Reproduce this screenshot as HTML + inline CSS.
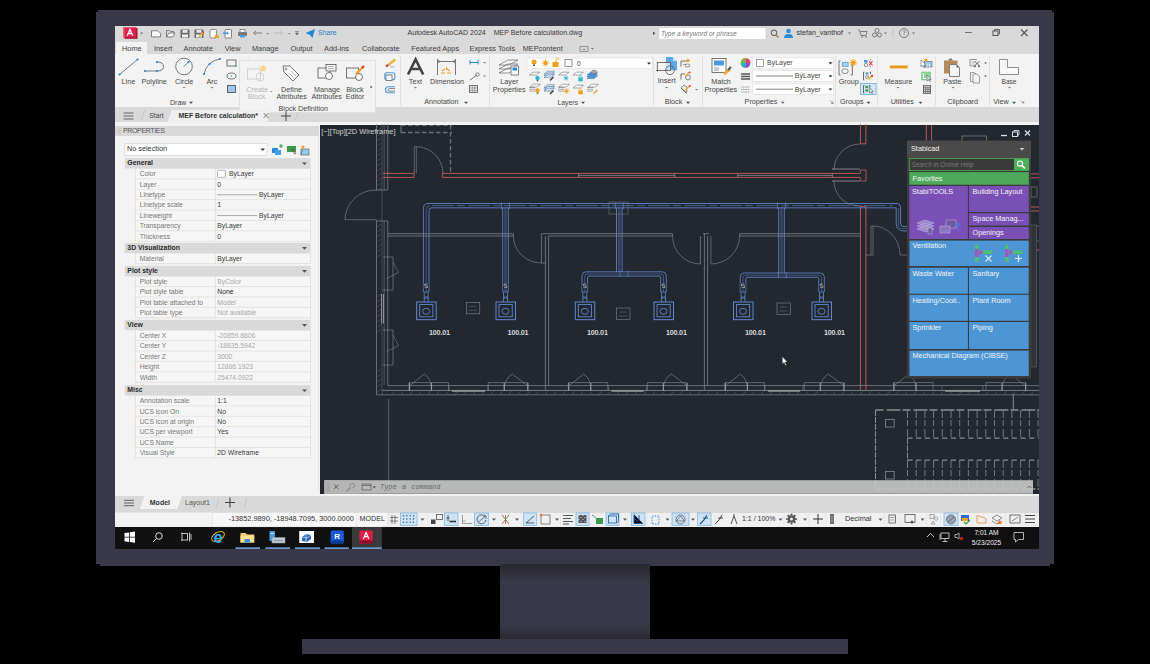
<!DOCTYPE html>
<html><head><meta charset="utf-8"><style>
html,body{margin:0;padding:0;}
body{width:1150px;height:664px;background:#000;position:relative;overflow:hidden;font-family:"Liberation Sans", sans-serif;}
.t{position:absolute;white-space:pre;font-family:"Liberation Sans", sans-serif;}
div{box-sizing:border-box;}
svg{position:absolute;left:0;top:0;}
</style></head><body>

<div style="position:absolute;left:96px;top:12px;width:958px;height:552px;background:#393849;"></div>
<div style="position:absolute;left:98px;top:10px;width:954px;height:2px;background:#393849;"></div>
<div style="position:absolute;left:100px;top:564px;width:950px;height:2px;background:#393849;"></div>
<div style="position:absolute;left:500px;top:564px;width:150px;height:75px;background:linear-gradient(#2a2a33 0px,#2c2b35 7px,#33323f 12px,#393849 17px,#393849 62px,#33323f 67px,#2c2b35 71px,#2a2a33 75px);"></div>
<div style="position:absolute;left:302px;top:639px;width:546px;height:15px;background:#393849;"></div>
<div style="position:absolute;left:115px;top:26px;width:924px;height:16px;background:#d9d9d9;"></div>
<div style="position:absolute;left:115px;top:42px;width:924px;height:12px;background:#d9d9d9;"></div>
<div style="position:absolute;left:116px;top:42px;width:31px;height:12px;background:#f3f3f3;"></div>
<div style="position:absolute;left:115px;top:54px;width:924px;height:53px;background:#f3f3f3;"></div>
<div style="position:absolute;left:115px;top:107px;width:924px;height:15px;background:#d9d9d9;"></div>
<div style="position:absolute;left:115px;top:122px;width:924px;height:3px;background:#f3f3f3;"></div>
<div style="position:absolute;left:115px;top:122px;width:205px;height:372px;background:#f3f3f3;"></div>
<div style="position:absolute;left:320px;top:125px;width:719px;height:369px;background:#212830;"></div>
<div style="position:absolute;left:115px;top:494px;width:924px;height:2px;background:#f3f3f3;"></div>
<div style="position:absolute;left:115px;top:496px;width:924px;height:16.5px;background:#d9d9d9;"></div>
<div style="position:absolute;left:115px;top:512.5px;width:924px;height:14.5px;background:#f0f0f0;"></div>
<div style="position:absolute;left:115px;top:527px;width:924px;height:22px;background:#101010;"></div>
<svg width="1150" height="664" viewBox="0 0 1150 664"><path d="M124.5 28 h13 v10.8 h-13z" fill="#a3102c"/><path d="M123 27.3 h13.3 v10.2 h-13.3z" fill="#e21f4b"/><path d="M123 27.3 h1.5 v10.2 h-1.5z" fill="#f06080"/><path d="M127.2 35.8 L130 29.3 L132.8 35.8 M128.5 33.5 h3" stroke="#fff" stroke-width="1.3" fill="none"/><path d="M140 32.5 h3 l-1.5 1.8z" fill="#666"/><path d="M151.5 30.8 h6.5 l2.5 2.5 v3.6 h-9z" fill="#fafafa" stroke="#666" stroke-width="0.8"/><path d="M166.5 30.5 h3 l1 1 h3 v2" fill="none" stroke="#666" stroke-width="0.8"/><path d="M166.5 30.5 v6.5 h6 l2.5 -4 h-6 l-2.5 4" fill="#fafafa" stroke="#666" stroke-width="0.8"/><rect x="180.5" y="29.5" width="9" height="8.5" fill="#6a6a6a" rx="0.8"/><rect x="182.5" y="30" width="5" height="2.8" fill="#e8e8e8"/><rect x="182" y="34.5" width="6" height="3" fill="#f0f0f0"/><rect x="194.5" y="29.5" width="9" height="8.5" fill="#6a6a6a" rx="0.8"/><rect x="196.5" y="30" width="5" height="2.8" fill="#e8e8e8"/><rect x="196" y="34.5" width="6" height="3" fill="#f0f0f0"/><path d="M199 37 l4 -4.5" stroke="#e8b040" stroke-width="1.8"/><circle cx="203.3" cy="32.3" r="0.9" fill="#e33"/><rect x="210" y="29.5" width="6.5" height="8.5" fill="#fafafa" stroke="#777" stroke-width="0.8" rx="0.8"/><path d="M214.5 38 q0 -3.5 2.5 -3.5 q2 0 2 3.5z" fill="#f0a020"/><rect x="225" y="29.5" width="6.5" height="8.5" fill="#fafafa" stroke="#666" stroke-width="0.8" rx="0.8"/><path d="M223 33.2 h5" stroke="#2a8ad8" stroke-width="1.3"/><path d="M227 31.8 l1.5 1.4 l-1.5 1.4" stroke="#2a8ad8" stroke-width="0.8" fill="none"/><rect x="238" y="32" width="9" height="4" fill="#777" rx="1"/><rect x="240" y="29.5" width="5" height="3" fill="#fafafa" stroke="#666" stroke-width="0.7"/><rect x="240" y="35" width="5" height="2.5" fill="#4aa0e0"/><path d="M262 33 h-8 M256 31 l-2.5 2 l2.5 2" stroke="#777" stroke-width="0.9" fill="none"/><path d="M266.5 33 h2.5 l-1.25 1.5z" fill="#777"/><path d="M274 33 h8 M280 31 l2.5 2 l-2.5 2" stroke="#bbb" stroke-width="0.9" fill="none"/><path d="M288 33 h2.5 l-1.25 1.5z" fill="#888"/><path d="M295 31.5 h4 M295.5 33 h3 l-1.5 2z" stroke="#666" stroke-width="0.6" fill="#666"/><path d="M305.5 33 l9.5 -4 l-2.5 9 l-2.5 -3 z" fill="#1f86d8"/><path d="M653 31.5 l2.5 1.75 l-2.5 1.75z" fill="#555"/><rect x="659" y="27.5" width="107" height="12" fill="#fff" stroke="#ccc" stroke-width="0.6"/><circle cx="774" cy="32.8" r="2.8" fill="none" stroke="#555" stroke-width="1"/><path d="M776 35 l2.5 2.5" stroke="#9a7a3a" stroke-width="1.3"/><circle cx="788.5" cy="31" r="2.3" fill="#2a8ad8"/><path d="M784 38 q0 -4 4.5 -4 q4.5 0 4.5 4z" fill="#2a8ad8"/><path d="M848 32.5 h3 l-1.5 1.8z" fill="#777"/><path d="M858 30 h1.5 l1.5 5.5 h5 l1 -4 h-6.5" fill="none" stroke="#666" stroke-width="0.8"/><circle cx="862" cy="37" r="0.8" fill="#666"/><circle cx="866" cy="37" r="0.8" fill="#666"/><circle cx="877" cy="30.5" r="2" fill="none" stroke="#666" stroke-width="0.8"/><circle cx="874.5" cy="35" r="2" fill="none" stroke="#666" stroke-width="0.8"/><circle cx="879.5" cy="35" r="2" fill="none" stroke="#666" stroke-width="0.8"/><path d="M884 32.5 h3 l-1.5 1.8z" fill="#777"/><path d="M893 28 v10" stroke="#bbb" stroke-width="0.7"/><circle cx="904" cy="33" r="4.5" fill="none" stroke="#666" stroke-width="0.8"/><path d="M912 32.5 h3 l-1.5 1.8z" fill="#777"/><path d="M965 32.5 h7" stroke="#666" stroke-width="0.9"/><rect x="993" y="31" width="5" height="4.5" fill="none" stroke="#555" stroke-width="1"/><path d="M994.5 31 v-1.5 h5 v4.5 h-1.5" fill="none" stroke="#555" stroke-width="0.9"/><path d="M1021 29.5 l6.5 6.5 M1027.5 29.5 l-6.5 6.5" stroke="#555" stroke-width="1.1"/><rect x="580" y="46.5" width="8" height="5" fill="none" stroke="#777" stroke-width="0.7"/><path d="M582.5 50 l1.5 -1.5 l1.5 1.5z" fill="#777"/><path d="M591 48 h3 l-1.5 1.8z" fill="#777"/><path d="M249.5 56 v50" stroke="#dcdcdc" stroke-width="0.8"/><path d="M400.5 56 v50" stroke="#dcdcdc" stroke-width="0.8"/><path d="M489.5 56 v50" stroke="#dcdcdc" stroke-width="0.8"/><path d="M653.5 56 v50" stroke="#dcdcdc" stroke-width="0.8"/><path d="M702.5 56 v50" stroke="#dcdcdc" stroke-width="0.8"/><path d="M835.5 56 v50" stroke="#dcdcdc" stroke-width="0.8"/><path d="M877.5 56 v50" stroke="#dcdcdc" stroke-width="0.8"/><path d="M935.5 56 v50" stroke="#dcdcdc" stroke-width="0.8"/><path d="M989.5 56 v50" stroke="#dcdcdc" stroke-width="0.8"/><path d="M119.5 74.5 L137.5 59.5" stroke="#555" stroke-width="0.8"/><circle cx="119.5" cy="74.5" r="1.1" fill="#1e88e5"/><circle cx="137.5" cy="59.5" r="1.1" fill="#1e88e5"/><path d="M145 71 h12 M157 62 q6.5 0 6.5 4.5 q0 4.5 -6.5 4.5" stroke="#555" stroke-width="0.8" fill="none"/><circle cx="145" cy="71" r="1.1" fill="#1e88e5"/><circle cx="157" cy="71" r="1.1" fill="#1e88e5"/><circle cx="157" cy="62" r="1.1" fill="#1e88e5"/><circle cx="184" cy="66.5" r="8.3" fill="none" stroke="#555" stroke-width="0.8"/><path d="M184 66.5 l4.5 -4.5" stroke="#1e88e5" stroke-width="0.9"/><circle cx="188.5" cy="62" r="1.1" fill="#1e88e5"/><path d="M182.5 87 h3 l-1.5 1.5z" fill="#777"/><path d="M204 74 q3 -13 16 -15" stroke="#555" stroke-width="0.8" fill="none"/><circle cx="204" cy="74" r="1.1" fill="#1e88e5"/><circle cx="209.5" cy="64" r="1.1" fill="#1e88e5"/><circle cx="220" cy="59" r="1.1" fill="#1e88e5"/><path d="M210.5 87 h3 l-1.5 1.5z" fill="#777"/><rect x="227" y="60" width="9" height="6" fill="none" stroke="#555" stroke-width="0.8"/><circle cx="236" cy="66" r="0.7" fill="#1e88e5"/><ellipse cx="231.5" cy="76" rx="4.5" ry="3" fill="none" stroke="#555" stroke-width="0.8"/><circle cx="231.5" cy="76" r="0.7" fill="#1e88e5"/><rect x="227.5" y="85.5" width="8" height="7" fill="#9ccaf0" stroke="#444" stroke-width="0.8"/><path d="M189 101.8 h4 l-2 2.2z" fill="#555"/><path d="M389 64.5 l5.5 -4.5" stroke="#f2b440" stroke-width="2.6" stroke-linecap="round"/><path d="M386 66.5 l2.2 -1.6" stroke="#e02a2a" stroke-width="2"/><path d="M390 66.8 h4.8" stroke="#7ab8e8" stroke-width="0.8"/><rect x="384.8" y="72.8" width="10" height="7" rx="2" fill="none" stroke="#4a9ae0" stroke-width="1.1"/><rect x="386" y="75" width="6" height="5.5" fill="#f8f8f8" stroke="#666" stroke-width="0.8"/><path d="M395 86.8 h-6.5 q-3 0 -3 3 q0 3 3 3 h6.5" stroke="#4a9ae0" stroke-width="1.1" fill="none"/><path d="M395 88.5 h-5.5 q-1.3 0 -1.3 1.3 q0 1.3 1.3 1.3 h5.5" stroke="#666" stroke-width="0.8" fill="none"/><rect x="239.5" y="60.5" width="136" height="52" fill="#f3f3f3" stroke="#dedede" stroke-width="0.8"/><rect x="247.5" y="69" width="13" height="10" fill="none" stroke="#c8c8c8" stroke-width="0.8"/><circle cx="260" cy="77" r="4" fill="none" stroke="#c8c8c8" stroke-width="0.8"/><circle cx="263" cy="68.5" r="3" fill="#f8d890"/><path d="M270 91 h2.5 l-1.25 1.5z" fill="#999"/><path d="M283 66 h7 l9 9 l-6 6 l-9 -9z" fill="#fafafa" stroke="#555" stroke-width="0.8"/><circle cx="286" cy="69" r="1" fill="none" stroke="#555" stroke-width="0.6"/><path d="M289 73 l5 5 M291 71 l5 5" stroke="#888" stroke-width="0.5"/><rect x="318" y="68" width="12" height="10" fill="none" stroke="#555" stroke-width="0.8"/><circle cx="329" cy="76" r="3.5" fill="#fafafa" stroke="#555" stroke-width="0.8"/><rect x="326" y="64.5" width="10" height="6.5" fill="#fafafa" stroke="#555" stroke-width="0.8"/><path d="M328 66.5 h6 M328 68.5 h6" stroke="#777" stroke-width="0.5"/><rect x="346.5" y="68" width="12" height="10" fill="none" stroke="#555" stroke-width="0.8"/><circle cx="359" cy="77" r="3.5" fill="#fafafa" stroke="#555" stroke-width="0.8"/><path d="M356 74 l7 -7" stroke="#f0a020" stroke-width="2.3"/><path d="M362 68 l2 -2" stroke="#e33" stroke-width="2.3"/><path d="M370.5 85.5 l2 1.5 l-2 1.5z" fill="#555"/><path d="M408 74.5 L415.6 59.5 L423.2 74.5 M410.8 69 h9.6" stroke="#444" stroke-width="2.6" fill="none"/><path d="M414 87 h3 l-1.5 1.5z" fill="#777"/><path d="M437.5 59 v16 M455.5 59 v16 M438 61.5 h17" stroke="#555" stroke-width="0.8"/><path d="M438 60 l2 1.5 l-2 1.5 M455 60 l-2 1.5 l2 1.5" stroke="#555" stroke-width="0.6" fill="none"/><path d="M442 71 l3 -2 M450 71 l-3 -2 M446.5 67 v3 M441 73 h4 M447 73 h4" stroke="#f0a020" stroke-width="1.1"/><path d="M470 60 v4.5 M478 60 v4.5 M470 62.5 h8" stroke="#2a8ad8" stroke-width="1"/><path d="M483 62 h3 l-1.5 1.5z" fill="#777"/><path d="M470 80 l7 -5" stroke="#555" stroke-width="0.8"/><circle cx="477.5" cy="74.5" r="1.7" fill="none" stroke="#555" stroke-width="0.7"/><path d="M483 75.5 h3 l-1.5 1.5z" fill="#777"/><rect x="469.5" y="85.5" width="8" height="7" fill="none" stroke="#555" stroke-width="0.8"/><path d="M469.5 88 h8 M469.5 90.3 h8 M472.2 85.5 v7 M474.9 85.5 v7" stroke="#555" stroke-width="0.5"/><path d="M464 101.8 h4 l-2 2.2z" fill="#555"/><path d="M499 65 l9 -5 h10 l-9 5z M499 69 l9 -5 h10 l-9 5z M499 73 l9 -5 h10 l-9 5z" fill="#f6f6f6" stroke="#666" stroke-width="0.7"/><rect x="511" y="66" width="7.5" height="9" fill="#fafafa" stroke="#555" stroke-width="0.7"/><rect x="512.5" y="67.5" width="4.5" height="3" fill="#2a8ad8"/><rect x="527" y="58" width="125" height="10.5" fill="#fff" stroke="#ddd" stroke-width="0.6"/><circle cx="534" cy="62" r="2.5" fill="#f0a020"/><rect x="533" y="64.5" width="2" height="1.5" fill="#555"/><circle cx="545.5" cy="63" r="2.2" fill="#f0a020"/><path d="M545.5 59 v8 M541.5 63 h8 M542.7 60.2 l5.6 5.6 M548.3 60.2 l-5.6 5.6" stroke="#f0a020" stroke-width="0.7"/><rect x="552.5" y="62" width="6" height="5" fill="#f0a020"/><path d="M556 62 v-2 q0 -1.5 1.5 -1.5 q1.5 0 1.5 1.5" stroke="#f0a020" stroke-width="0.9" fill="none"/><rect x="565" y="59.5" width="7" height="7" fill="#fff" stroke="#666" stroke-width="0.7"/><path d="M647 62.5 h4 l-2 2.2z" fill="#333"/><path d="M529.5 75 l3.5 -2.8 h7 l-3.5 2.8z" fill="#fafafa" stroke="#777" stroke-width="0.6"/><circle cx="537.5" cy="78" r="2.2" fill="#2ab8d0"/><rect x="536.7" y="80" width="1.6" height="1.3" fill="#555"/><path d="M544 74.0 l3.5 -2.8 h7 l-3.5 2.8z" fill="#cfe3f5" stroke="#5a7aa0" stroke-width="0.6"/><path d="M544 75.8 l3.5 -2.8 h7 l-3.5 2.8z" fill="#cfe3f5" stroke="#5a7aa0" stroke-width="0.6"/><path d="M544 77.6 l3.5 -2.8 h7 l-3.5 2.8z" fill="#cfe3f5" stroke="#5a7aa0" stroke-width="0.6"/><path d="M550 80.5 l3.5 -3.5" stroke="#333" stroke-width="1.2"/><path d="M558.5 75 l3.5 -2.8 h7 l-3.5 2.8z" fill="#fafafa" stroke="#777" stroke-width="0.6"/><path d="M566 75.5 v5 M563.8 78 h4.4 M564.4 76.4 l3.2 3.2 M567.6 76.4 l-3.2 3.2" stroke="#2ab8d0" stroke-width="0.9"/><path d="M573 75 l3.5 -2.8 h7 l-3.5 2.8z" fill="#fafafa" stroke="#777" stroke-width="0.6"/><rect x="578.3" y="77.5" width="4.5" height="3.8" fill="#2ab8d0"/><path d="M579 77.5 v-1 q1.5 -2 3 0 v1" stroke="#2ab8d0" stroke-width="0.8" fill="none"/><path d="M587 75.0 l3.5 -2.8 h7 l-3.5 2.8z" fill="#4a9ae0" stroke="#4a7ab0" stroke-width="0.6"/><path d="M587 76.8 l3.5 -2.8 h7 l-3.5 2.8z" fill="#4a9ae0" stroke="#4a7ab0" stroke-width="0.6"/><path d="M587 78.6 l3.5 -2.8 h7 l-3.5 2.8z" fill="#4a9ae0" stroke="#4a7ab0" stroke-width="0.6"/><ellipse cx="594" cy="72" rx="2.5" ry="1.8" fill="#aaa" stroke="#666" stroke-width="0.5"/><path d="M529 87.5 h6 M529 89.3 h6 M529 91.1 h6" stroke="#777" stroke-width="0.6"/><path d="M530 87 l3.5 -2.8 h7 l-3.5 2.8z" fill="#fafafa" stroke="#777" stroke-width="0.6"/><circle cx="537.5" cy="90.5" r="2.3" fill="#f0a020"/><rect x="536.7" y="92.6" width="1.6" height="1.3" fill="#555"/><path d="M544 87.5 l3.5 -2.8 h7 l-3.5 2.8z" fill="#cfe3f5" stroke="#5a7aa0" stroke-width="0.6"/><path d="M544 89.3 l3.5 -2.8 h7 l-3.5 2.8z" fill="#cfe3f5" stroke="#5a7aa0" stroke-width="0.6"/><path d="M544 91.1 l3.5 -2.8 h7 l-3.5 2.8z" fill="#cfe3f5" stroke="#5a7aa0" stroke-width="0.6"/><path d="M550 94 l3.5 -3.5" stroke="#333" stroke-width="1.2"/><path d="M558 87.5 h6 M558 89.3 h6 M558 91.1 h6" stroke="#777" stroke-width="0.6"/><path d="M559 87 l3.5 -2.8 h7 l-3.5 2.8z" fill="#fafafa" stroke="#777" stroke-width="0.6"/><circle cx="566.5" cy="91" r="1.6" fill="#f0a020"/><path d="M566.5 88 v6 M563.5 91 h6 M564.4 88.9 l4.2 4.2 M568.6 88.9 l-4.2 4.2" stroke="#f0a020" stroke-width="0.6"/><path d="M573 88 l3.5 -2.8 h7 l-3.5 2.8z" fill="#fafafa" stroke="#777" stroke-width="0.6"/><rect x="578.3" y="90.5" width="4.5" height="3.8" fill="#f0a020"/><path d="M579 90.5 v-1 q1.5 -2 3 0" stroke="#f0a020" stroke-width="0.8" fill="none"/><path d="M587 87.5 h6 M587 89.3 h6 M587 91.1 h6" stroke="#777" stroke-width="0.6"/><path d="M588 87 l3.5 -2.8 h7 l-3.5 2.8z" fill="#fafafa" stroke="#777" stroke-width="0.6"/><path d="M593.5 93.5 l4 -3.5" stroke="#f0a020" stroke-width="1.6"/><path d="M581 101.8 h4 l-2 2.2z" fill="#555"/><path d="M666 57 h7 l4 4 v9.3 h-11z" fill="#5aa8e8"/><path d="M673 57 v4 h4z" fill="#cfe6fa"/><rect x="657.3" y="62.5" width="13.3" height="8" fill="#f3f3f3" fill-opacity="0.75" stroke="#555" stroke-width="0.8"/><circle cx="670" cy="70.2" r="4.4" fill="none" stroke="#555" stroke-width="0.8"/><circle cx="657.3" cy="70.5" r="0.8" fill="#333"/><path d="M665 87 h3 l-1.5 1.5z" fill="#777"/><path d="M681 66.5 v-5.5 h6" stroke="#555" stroke-width="0.8" fill="none"/><path d="M683 64.5 h3" stroke="#777" stroke-width="0.6"/><ellipse cx="687.5" cy="65.5" rx="2.5" ry="1.5" fill="none" stroke="#555" stroke-width="0.6"/><circle cx="688" cy="60.5" r="1.6" fill="#f0a020"/><path d="M681 79.5 v-5.5 h4" stroke="#555" stroke-width="0.8" fill="none"/><circle cx="688" cy="77.5" r="2.4" fill="none" stroke="#555" stroke-width="0.7"/><path d="M685 76.5 l3.5 -3.5" stroke="#f0b030" stroke-width="1.5"/><circle cx="689.5" cy="72.5" r="1" fill="#e33"/><path d="M681 88 l3 -3 l3 2 l-0.5 6 z" fill="none" stroke="#555" stroke-width="0.7"/><path d="M681 88 l5.5 5" stroke="#555" stroke-width="0.7"/><path d="M685.5 90 l3.5 -3.5" stroke="#f0b030" stroke-width="1.5"/><circle cx="689.7" cy="86" r="1" fill="#e33"/><path d="M695 89 h3 l-1.5 1.5z" fill="#777"/><path d="M686 101.8 h4 l-2 2.2z" fill="#555"/><rect x="712" y="58.5" width="14" height="14" fill="#fafafa" stroke="#555" stroke-width="0.8"/><rect x="714" y="60.5" width="10" height="5" fill="#4a9ae0"/><path d="M714 68 h5 M714 70 h5" stroke="#555" stroke-width="0.6"/><path d="M724 74 l6 -5" stroke="#f0a020" stroke-width="2.6"/><path d="M728 70 l3 -3" stroke="#555" stroke-width="2"/><circle cx="745.5" cy="63" r="4.8" fill="#e84"/><path d="M745.5 63 L745.5 58.2 A4.8 4.8 0 0 1 750.3 63z" fill="#f03c7a"/><path d="M745.5 63 L750.3 63 A4.8 4.8 0 0 1 745.5 67.8z" fill="#7a5adc"/><path d="M745.5 63 L745.5 67.8 A4.8 4.8 0 0 1 740.7 63z" fill="#2ab0c8"/><path d="M745.5 63 L740.7 63 A4.8 4.8 0 0 1 745.5 58.2z" fill="#6ac040"/><path d="M741 74 h9 M741 76.5 h9 M741 79 h9" stroke="#555" stroke-width="1.3"/><path d="M741 87 h9 M741 89.5 h9 M741 92 h9" stroke="#888" stroke-width="0.8" stroke-dasharray="1.5 0.7"/><rect x="752.6" y="57.8" width="81" height="10.7" fill="#fff" stroke="#ddd" stroke-width="0.6"/><path d="M828.5 62.3 h4 l-2 2.2z" fill="#333"/><rect x="752.6" y="70.7" width="81" height="10.7" fill="#fff" stroke="#ddd" stroke-width="0.6"/><path d="M828.5 75.2 h4 l-2 2.2z" fill="#333"/><rect x="752.6" y="83.9" width="81" height="10.7" fill="#fff" stroke="#ddd" stroke-width="0.6"/><path d="M828.5 88.4 h4 l-2 2.2z" fill="#333"/><rect x="756.5" y="59.5" width="7" height="7" fill="#fff" stroke="#777" stroke-width="0.7"/><path d="M756 76 h37 M756 89.2 h37" stroke="#555" stroke-width="0.75"/><path d="M781 101.8 h3.5 l-1.75 2z" fill="#555"/><path d="M830 100.5 l3 3 M831 103.5 h2 v-2" stroke="#666" stroke-width="0.6" fill="none"/><path d="M840.5 61 h-1.5 v14 h1.5 M850.8 65 h1.5 v10 h-1.5" stroke="#555" stroke-width="0.8" fill="none"/><rect x="842.3" y="62.3" width="5.8" height="4" fill="#a8d0f4" stroke="#4a9ae0" stroke-width="0.7"/><ellipse cx="845" cy="71.2" rx="3.2" ry="2.4" fill="none" stroke="#666" stroke-width="0.7"/><circle cx="853.3" cy="62.7" r="2.3" fill="#f0a010"/><path d="M855.50 62.70 L857.10 62.70" stroke="#f0a010" stroke-width="0.9"/><path d="M854.86 64.26 L855.99 65.39" stroke="#f0a010" stroke-width="0.9"/><path d="M853.30 64.90 L853.30 66.50" stroke="#f0a010" stroke-width="0.9"/><path d="M851.74 64.26 L850.61 65.39" stroke="#f0a010" stroke-width="0.9"/><path d="M851.10 62.70 L849.50 62.70" stroke="#f0a010" stroke-width="0.9"/><path d="M851.74 61.14 L850.61 60.01" stroke="#f0a010" stroke-width="0.9"/><path d="M853.30 60.50 L853.30 58.90" stroke="#f0a010" stroke-width="0.9"/><path d="M854.86 61.14 L855.99 60.01" stroke="#f0a010" stroke-width="0.9"/><rect x="864" y="60" width="3.6" height="2.6" fill="#4a9ae0"/><circle cx="866" cy="65" r="1.7" fill="none" stroke="#555" stroke-width="0.6"/><path d="M869 61 l3.5 4.5 M872.5 61 l-3.5 4.5" stroke="#e33" stroke-width="1.1"/><path d="M870.5 59 v1 M870.5 66 v1" stroke="#555" stroke-width="0.6"/><path d="M864.5 72 h-1 v8 h1 M869.5 72 h1 v2" stroke="#333" stroke-width="0.7" fill="none"/><rect x="865.5" y="72.5" width="3" height="2" fill="#4a9ae0"/><circle cx="867" cy="77" r="1.5" fill="none" stroke="#555" stroke-width="0.6"/><path d="M868.5 79.5 l4 -4" stroke="#f0c040" stroke-width="1.8"/><path d="M871.5 76.5 l1.3 -1.3" stroke="#e33" stroke-width="1.8"/><rect x="860.5" y="83.5" width="15.5" height="11" fill="#d6e8f8" stroke="#6aaee8" stroke-width="0.8"/><path d="M864.5 85.5 h-1 v7.5 h1 M869 85.5 h1 v2" stroke="#333" stroke-width="0.7" fill="none"/><rect x="865.3" y="85.8" width="3" height="2.4" fill="#3aa050"/><rect x="865.3" y="89.3" width="3" height="2.4" fill="#3aa050"/><path d="M869.5 87.5 v5.5 l1.3 -1.1 l1 1.9 l0.8 -0.4 l-1 -1.9 h1.8z" fill="#eee" stroke="#444" stroke-width="0.5"/><path d="M866.5 101.8 h4 l-2 2.2z" fill="#555"/><rect x="889.8" y="65.5" width="18" height="3" fill="#f0a020"/><path d="M891 66 v1 M893 66 v1 M895 66 v1 M897 66 v1 M899 66 v1 M901 66 v1 M903 66 v1 M905 66 v1" stroke="#a86a10" stroke-width="0.5"/><path d="M896.5 87 h3 l-1.5 1.5z" fill="#777"/><rect x="924.5" y="61.5" width="7.5" height="5.5" fill="#9ac8f0" stroke="#666" stroke-width="0.6"/><path d="M927 64 v3 M929.5 64 v3" stroke="#fff" stroke-width="0.7"/><path d="M921 60 v7 l1.8 -1.6 l1.2 2.4 l1 -0.5 l-1.2 -2.3 h2.4z" fill="#fff" stroke="#444" stroke-width="0.5"/><circle cx="926" cy="60" r="1.6" fill="#f0a020"/><rect x="921.5" y="72" width="9" height="8" fill="#8cd89a" stroke="#4ab060" stroke-width="0.6" stroke-dasharray="1 0.6"/><path d="M923.5 73.5 v5 h3" stroke="#fff" stroke-width="1.1" fill="none"/><path d="M927 75 v6 l1.5 -1.3 l1 2 l0.8 -0.4 l-1 -2 h2z" fill="#ddd" stroke="#555" stroke-width="0.5"/><rect x="923" y="85" width="8" height="9" fill="#666"/><rect x="924.0" y="87.5" width="1.3" height="1.3" fill="#eee"/><rect x="924.0" y="89.7" width="1.3" height="1.3" fill="#eee"/><rect x="924.0" y="91.9" width="1.3" height="1.3" fill="#eee"/><rect x="926.2" y="87.5" width="1.3" height="1.3" fill="#eee"/><rect x="926.2" y="89.7" width="1.3" height="1.3" fill="#eee"/><rect x="926.2" y="91.9" width="1.3" height="1.3" fill="#eee"/><rect x="928.4" y="87.5" width="1.3" height="1.3" fill="#eee"/><rect x="928.4" y="89.7" width="1.3" height="1.3" fill="#eee"/><rect x="928.4" y="91.9" width="1.3" height="1.3" fill="#eee"/><rect x="924" y="85.8" width="6" height="1" fill="#ddd"/><path d="M918.5 101.8 h4 l-2 2.2z" fill="#555"/><path d="M944 60.5 h13.5 v4 h-7 v9 h-6.5z" fill="#b48a5a"/><path d="M948 60.5 l1.5 -2 h2 l1.5 2z" fill="#777"/><path d="M949.5 64.5 h7 l3 3 v9 h-10z" fill="#f4f4f4" stroke="#666" stroke-width="0.8"/><path d="M956.5 64.5 v3 h3z" fill="#666"/><path d="M951.5 87 h3 l-1.5 1.5z" fill="#777"/><path d="M970 59.5 h7 M970 59.5 v6.5 h4" stroke="#777" stroke-width="0.8" fill="none"/><path d="M971.5 62 h4 M971.5 64 h3" stroke="#888" stroke-width="0.6"/><path d="M974.5 61 l5 5 M979.5 61 l-5 5" stroke="#444" stroke-width="0.8"/><circle cx="975" cy="66.3" r="0.9" fill="#444"/><circle cx="979" cy="66.3" r="0.9" fill="#444"/><path d="M984 62.5 h3 l-1.5 1.5z" fill="#555"/><path d="M970.5 72.5 h4 l2 2 v7 h-6z" fill="#f4f4f4" stroke="#777" stroke-width="0.7"/><path d="M973 74 h4 l2.5 2.5 v6.5 h-6.5z" fill="#f4f4f4" stroke="#777" stroke-width="0.7"/><path d="M984 75.5 h3 l-1.5 1.5z" fill="#555"/><path d="M999.5 59.5 h8 v8 h11 v7 h-19z" fill="#f8f8f8" stroke="#777" stroke-width="0.8"/><path d="M1008 87 h3 l-1.5 1.5z" fill="#777"/><path d="M1012 101.8 h4 l-2 2.2z" fill="#555"/><path d="M1021 100.5 l2.5 2.5 M1022 103 h1.8 v-1.8" stroke="#666" stroke-width="0.6" fill="none"/><path d="M123.5 113 h10 M123.5 116 h10 M123.5 119 h10" stroke="#555" stroke-width="0.9"/><path d="M141 121 l4 -11" stroke="#bbb" stroke-width="0.6"/><path d="M167 123 l5 -13 h98 l-3 13z" fill="#f0f0f0"/><path d="M263.5 113 l5 5 M268.5 113 l-5 5" stroke="#555" stroke-width="0.8"/><path d="M281 116 h10 M286 111 v10" stroke="#444" stroke-width="1"/><path d="M295 121 l3 -9" stroke="#bbb" stroke-width="0.6"/><rect x="115" y="126" width="204" height="10" fill="#d9d9d9"/><path d="M118 128 v6 M120 128 v6" stroke="#aaa" stroke-width="0.5"/><rect x="124.7" y="143.6" width="142.3" height="11.8" fill="#fff" stroke="#d0d0d0" stroke-width="0.6"/><path d="M260.5 148.5 h4.5 l-2.25 2.4z" fill="#333"/><rect x="272" y="148" width="6" height="5" fill="#2a8ad8"/><rect x="275" y="150" width="6" height="5" fill="#4aa0e8"/><path d="M279 146 h4 M281 144 v4" stroke="#2a9a4a" stroke-width="1"/><rect x="287" y="146" width="9" height="6" fill="#3a9a4a"/><path d="M292 149 l4 4.5 l-1.5 0.3z" fill="#fff" stroke="#333" stroke-width="0.6"/><rect x="301" y="149" width="8" height="6" fill="#9ac8f0" stroke="#555" stroke-width="0.6"/><circle cx="303" cy="147" r="1.5" fill="#f0a020"/><path d="M300 155 l3 -5" stroke="#555" stroke-width="0.6"/><rect x="124.8" y="158.20" width="185.70" height="10.3" fill="#d9d9d9"/><path d="M302.0 162.40 h5 l-2.5 2.6z" fill="#555"/><rect x="135.5" y="168.50" width="175.00" height="72.73" fill="#f6f6f6" stroke="#dcdcdc" stroke-width="0.7"/><path d="M215.4 168.50 v72.73" stroke="#dcdcdc" stroke-width="0.7"/><rect x="217.5" y="170.30" width="8" height="7" fill="#fff" stroke="#888" stroke-width="0.6" rx="1"/><path d="M135.5 178.89 h175.00" stroke="#dcdcdc" stroke-width="0.7"/><path d="M135.5 189.28 h175.00" stroke="#dcdcdc" stroke-width="0.7"/><path d="M217 194.78 h40" stroke="#888" stroke-width="0.7"/><path d="M135.5 199.67 h175.00" stroke="#dcdcdc" stroke-width="0.7"/><path d="M135.5 210.06 h175.00" stroke="#dcdcdc" stroke-width="0.7"/><path d="M217 215.56 h40" stroke="#888" stroke-width="0.7"/><path d="M135.5 220.45 h175.00" stroke="#dcdcdc" stroke-width="0.7"/><path d="M135.5 230.84 h175.00" stroke="#dcdcdc" stroke-width="0.7"/><rect x="124.8" y="242.90" width="185.70" height="10.3" fill="#d9d9d9"/><path d="M302.0 247.10 h5 l-2.5 2.6z" fill="#555"/><rect x="135.5" y="253.20" width="175.00" height="10.39" fill="#f6f6f6" stroke="#dcdcdc" stroke-width="0.7"/><path d="M215.4 253.20 v10.39" stroke="#dcdcdc" stroke-width="0.7"/><rect x="124.8" y="265.90" width="185.70" height="10.3" fill="#d9d9d9"/><path d="M302.0 270.10 h5 l-2.5 2.6z" fill="#555"/><rect x="135.5" y="276.20" width="175.00" height="41.56" fill="#f6f6f6" stroke="#dcdcdc" stroke-width="0.7"/><path d="M215.4 276.20 v41.56" stroke="#dcdcdc" stroke-width="0.7"/><path d="M135.5 286.59 h175.00" stroke="#dcdcdc" stroke-width="0.7"/><path d="M135.5 296.98 h175.00" stroke="#dcdcdc" stroke-width="0.7"/><path d="M135.5 307.37 h175.00" stroke="#dcdcdc" stroke-width="0.7"/><rect x="124.8" y="319.90" width="185.70" height="10.3" fill="#d9d9d9"/><path d="M302.0 324.10 h5 l-2.5 2.6z" fill="#555"/><rect x="135.5" y="330.20" width="175.00" height="51.95" fill="#f6f6f6" stroke="#dcdcdc" stroke-width="0.7"/><path d="M215.4 330.20 v51.95" stroke="#dcdcdc" stroke-width="0.7"/><path d="M135.5 340.59 h175.00" stroke="#dcdcdc" stroke-width="0.7"/><path d="M135.5 350.98 h175.00" stroke="#dcdcdc" stroke-width="0.7"/><path d="M135.5 361.37 h175.00" stroke="#dcdcdc" stroke-width="0.7"/><path d="M135.5 371.76 h175.00" stroke="#dcdcdc" stroke-width="0.7"/><rect x="124.8" y="385.20" width="185.70" height="10.3" fill="#d9d9d9"/><path d="M302.0 389.40 h5 l-2.5 2.6z" fill="#555"/><rect x="135.5" y="395.50" width="175.00" height="62.34" fill="#f6f6f6" stroke="#dcdcdc" stroke-width="0.7"/><path d="M215.4 395.50 v62.34" stroke="#dcdcdc" stroke-width="0.7"/><path d="M135.5 405.89 h175.00" stroke="#dcdcdc" stroke-width="0.7"/><path d="M135.5 416.28 h175.00" stroke="#dcdcdc" stroke-width="0.7"/><path d="M135.5 426.67 h175.00" stroke="#dcdcdc" stroke-width="0.7"/><path d="M135.5 437.06 h175.00" stroke="#dcdcdc" stroke-width="0.7"/><path d="M135.5 447.45 h175.00" stroke="#dcdcdc" stroke-width="0.7"/><path d="M318.5 136 v357" stroke="#e6e6e6" stroke-width="1"/><g><path d="M376.5 124 V190 M387.8 124 V190 M376.5 221 V394.8 M387.8 221 V385.6" stroke="#8c8c8c" stroke-width="0.7" fill="none" /><path d="M382 124 V395" stroke="#6f6f6f" stroke-width="0.5" fill="none" /><path d="M384.2 124 V190 M384.2 221 V385" stroke="#7a7a7a" stroke-width="0.6" fill="none" /><path d="M377.5 131 L381 128" stroke="#6f6f6f" stroke-width="0.5" fill="none" /><path d="M377.5 136 L381 133" stroke="#6f6f6f" stroke-width="0.5" fill="none" /><path d="M377.5 141 L381 138" stroke="#6f6f6f" stroke-width="0.5" fill="none" /><path d="M377.5 146 L381 143" stroke="#6f6f6f" stroke-width="0.5" fill="none" /><path d="M377.5 151 L381 148" stroke="#6f6f6f" stroke-width="0.5" fill="none" /><path d="M377.5 156 L381 153" stroke="#6f6f6f" stroke-width="0.5" fill="none" /><path d="M377.5 161 L381 158" stroke="#6f6f6f" stroke-width="0.5" fill="none" /><path d="M377.5 166 L381 163" stroke="#6f6f6f" stroke-width="0.5" fill="none" /><path d="M377.5 171 L381 168" stroke="#6f6f6f" stroke-width="0.5" fill="none" /><path d="M377.5 176 L381 173" stroke="#6f6f6f" stroke-width="0.5" fill="none" /><path d="M377.5 181 L381 178" stroke="#6f6f6f" stroke-width="0.5" fill="none" /><path d="M377.5 186 L381 183" stroke="#6f6f6f" stroke-width="0.5" fill="none" /><path d="M377.5 191 L381 188" stroke="#6f6f6f" stroke-width="0.5" fill="none" /><path d="M377.5 227 L381 224" stroke="#6f6f6f" stroke-width="0.5" fill="none" /><path d="M377.5 232 L381 229" stroke="#6f6f6f" stroke-width="0.5" fill="none" /><path d="M377.5 237 L381 234" stroke="#6f6f6f" stroke-width="0.5" fill="none" /><path d="M377.5 242 L381 239" stroke="#6f6f6f" stroke-width="0.5" fill="none" /><path d="M377.5 247 L381 244" stroke="#6f6f6f" stroke-width="0.5" fill="none" /><path d="M377.5 252 L381 249" stroke="#6f6f6f" stroke-width="0.5" fill="none" /><path d="M377.5 257 L381 254" stroke="#6f6f6f" stroke-width="0.5" fill="none" /><path d="M377.5 297 L381 294" stroke="#6f6f6f" stroke-width="0.5" fill="none" /><path d="M377.5 302 L381 299" stroke="#6f6f6f" stroke-width="0.5" fill="none" /><path d="M377.5 307 L381 304" stroke="#6f6f6f" stroke-width="0.5" fill="none" /><path d="M377.5 312 L381 309" stroke="#6f6f6f" stroke-width="0.5" fill="none" /><path d="M377.5 317 L381 314" stroke="#6f6f6f" stroke-width="0.5" fill="none" /><path d="M377.5 322 L381 319" stroke="#6f6f6f" stroke-width="0.5" fill="none" /><path d="M377.5 327 L381 324" stroke="#6f6f6f" stroke-width="0.5" fill="none" /><path d="M377.5 332 L381 329" stroke="#6f6f6f" stroke-width="0.5" fill="none" /><path d="M377.5 372 L381 369" stroke="#6f6f6f" stroke-width="0.5" fill="none" /><path d="M377.5 377 L381 374" stroke="#6f6f6f" stroke-width="0.5" fill="none" /><path d="M377.5 382 L381 379" stroke="#6f6f6f" stroke-width="0.5" fill="none" /><path d="M377.5 387 L381 384" stroke="#6f6f6f" stroke-width="0.5" fill="none" /><path d="M377.5 392 L381 389" stroke="#6f6f6f" stroke-width="0.5" fill="none" /><path d="M376.5 190 h11.3 M376.5 221 h11.3" stroke="#8c8c8c" stroke-width="0.7" fill="none" /><path d="M383 257 h10 v33 h-10 M383 330 h10 v35 h-10" stroke="#8c8c8c" stroke-width="0.6" fill="none" /><path d="M393 262 l5.5 10.5 l-12 6" stroke="#8c8c8c" stroke-width="0.5" fill="none" /><path d="M393 335 l5.5 10.5 l-12 6" stroke="#8c8c8c" stroke-width="0.5" fill="none" /><path d="M381.5 294 v29.5 M383.5 294 v29.5" stroke="#9a9a9a" stroke-width="0.9" fill="none" /><path d="M344.5 219.7 H377 M345 219.7 A31 30 0 0 1 377 190" stroke="#8c8c8c" stroke-width="0.6" fill="none" /><path d="M383 173.4 H414 V177.4 H383" stroke="#c65e5a" stroke-width="0.9" fill="none" /><path d="M442.3 173.4 H860.4 M442.3 177.4 H860.4 M442.3 173.4 V177.4" stroke="#c65e5a" stroke-width="0.9" fill="none" /><path d="M860.4 170 H866 V181 H860.4 M860.4 170 V173.4 M860.4 177.4 V181" stroke="#c65e5a" stroke-width="0.8" fill="none" /><path d="M578.6 175.4 H674.7 M578.6 173.4 V177.4 M674.7 173.4 V177.4" stroke="#8a8a8a" stroke-width="0.8" fill="none" /><path d="M737.7 175.4 H832.3 M737.7 173.4 V177.4 M832.3 173.4 V177.4" stroke="#8a8a8a" stroke-width="0.8" fill="none" /><path d="M414.3 146.7 V173.4 M416.3 146.7 V173.4 M414.3 146.7 h2" stroke="#8c8c8c" stroke-width="0.6" fill="none" /><path d="M416.3 146.7 A27 27 0 0 1 443 173.4" stroke="#8c8c8c" stroke-width="0.6" fill="none" /><path d="M450.5 125 V173" stroke="#6e6e6e" stroke-width="1.4" fill="none" stroke-dasharray="4.5 2.5"/><path d="M401 132.5 H452" stroke="#6e6e6e" stroke-width="1.3" fill="none" stroke-dasharray="4.5 2.5"/><path d="M401 125.5 H452" stroke="#6e6e6e" stroke-width="1.1" fill="none" stroke-dasharray="4.5 2.5"/><path d="M401 125 V133" stroke="#777" stroke-width="1.0" fill="none" /><path d="M860.4 124 V143.8 H865.9 V124" stroke="#c65e5a" stroke-width="0.9" fill="none" /><path d="M860.4 206.3 V390 M865.9 206.3 V390 M860.4 206.3 H865.9" stroke="#c65e5a" stroke-width="0.9" fill="none" /><path d="M834 170 A26 26 0 0 1 860 144" stroke="#8c8c8c" stroke-width="0.6" fill="none" /><path d="M832 169 H860 M832 181 H860" stroke="#8c8c8c" stroke-width="0.9" fill="none" /><path d="M834 181 A25 25 0 0 0 859 206" stroke="#8c8c8c" stroke-width="0.6" fill="none" /><path d="M871 226 V255 M873 226 V255 M871 226 h2 M866 255 h7 M873 226 A27 29 0 0 1 900 255 M900 255 h10" stroke="#8c8c8c" stroke-width="0.6" fill="none" /><path d="M387.8 233.7 H513.4 M387.8 236 H513.4 M513.4 233.7 V236" stroke="#8c8c8c" stroke-width="0.7" fill="none" /><path d="M513.4 236 A28 27 0 0 0 541.4 263" stroke="#8c8c8c" stroke-width="0.6" fill="none" /><path d="M541.4 233.7 V263 H545.4 M545.4 236 V390 M548.6 236 V385.6" stroke="#8c8c8c" stroke-width="0.7" fill="none" /><path d="M541.4 233.7 H672.5 M548.6 236 H672.5 M672.5 233.7 V236" stroke="#8c8c8c" stroke-width="0.7" fill="none" /><path d="M672.5 236 A28 28 0 0 0 700.4 264" stroke="#8c8c8c" stroke-width="0.6" fill="none" /><path d="M700.4 236 V264 M704.4 233.7 V390 M707.6 236 V385.6 M703 233.7 h6" stroke="#8c8c8c" stroke-width="0.7" fill="none" /><path d="M710.9 236 V264 M710.9 264 A28.7 28 0 0 0 739.6 236" stroke="#8c8c8c" stroke-width="0.6" fill="none" /><path d="M739.6 233.7 H860.4 M739.6 236 H860.4 M739.6 233.7 V236" stroke="#8c8c8c" stroke-width="0.7" fill="none" /><path d="M387.8 385.6 H1039 M376.5 394.8 H1039" stroke="#8c8c8c" stroke-width="0.7" fill="none" /><path d="M382 390.4 H1039" stroke="#7c7c7c" stroke-width="1.0" fill="none" /><path d="M392 394.3 l2.5 -3" stroke="#6f6f6f" stroke-width="0.5" fill="none" /><path d="M401 394.3 l2.5 -3" stroke="#6f6f6f" stroke-width="0.5" fill="none" /><path d="M410 394.3 l2.5 -3" stroke="#6f6f6f" stroke-width="0.5" fill="none" /><path d="M419 394.3 l2.5 -3" stroke="#6f6f6f" stroke-width="0.5" fill="none" /><path d="M428 394.3 l2.5 -3" stroke="#6f6f6f" stroke-width="0.5" fill="none" /><path d="M437 394.3 l2.5 -3" stroke="#6f6f6f" stroke-width="0.5" fill="none" /><path d="M446 394.3 l2.5 -3" stroke="#6f6f6f" stroke-width="0.5" fill="none" /><path d="M455 394.3 l2.5 -3" stroke="#6f6f6f" stroke-width="0.5" fill="none" /><path d="M464 394.3 l2.5 -3" stroke="#6f6f6f" stroke-width="0.5" fill="none" /><path d="M473 394.3 l2.5 -3" stroke="#6f6f6f" stroke-width="0.5" fill="none" /><path d="M482 394.3 l2.5 -3" stroke="#6f6f6f" stroke-width="0.5" fill="none" /><path d="M491 394.3 l2.5 -3" stroke="#6f6f6f" stroke-width="0.5" fill="none" /><path d="M500 394.3 l2.5 -3" stroke="#6f6f6f" stroke-width="0.5" fill="none" /><path d="M509 394.3 l2.5 -3" stroke="#6f6f6f" stroke-width="0.5" fill="none" /><path d="M518 394.3 l2.5 -3" stroke="#6f6f6f" stroke-width="0.5" fill="none" /><path d="M527 394.3 l2.5 -3" stroke="#6f6f6f" stroke-width="0.5" fill="none" /><path d="M536 394.3 l2.5 -3" stroke="#6f6f6f" stroke-width="0.5" fill="none" /><path d="M545 394.3 l2.5 -3" stroke="#6f6f6f" stroke-width="0.5" fill="none" /><path d="M554 394.3 l2.5 -3" stroke="#6f6f6f" stroke-width="0.5" fill="none" /><path d="M563 394.3 l2.5 -3" stroke="#6f6f6f" stroke-width="0.5" fill="none" /><path d="M572 394.3 l2.5 -3" stroke="#6f6f6f" stroke-width="0.5" fill="none" /><path d="M581 394.3 l2.5 -3" stroke="#6f6f6f" stroke-width="0.5" fill="none" /><path d="M590 394.3 l2.5 -3" stroke="#6f6f6f" stroke-width="0.5" fill="none" /><path d="M599 394.3 l2.5 -3" stroke="#6f6f6f" stroke-width="0.5" fill="none" /><path d="M608 394.3 l2.5 -3" stroke="#6f6f6f" stroke-width="0.5" fill="none" /><path d="M617 394.3 l2.5 -3" stroke="#6f6f6f" stroke-width="0.5" fill="none" /><path d="M626 394.3 l2.5 -3" stroke="#6f6f6f" stroke-width="0.5" fill="none" /><path d="M635 394.3 l2.5 -3" stroke="#6f6f6f" stroke-width="0.5" fill="none" /><path d="M644 394.3 l2.5 -3" stroke="#6f6f6f" stroke-width="0.5" fill="none" /><path d="M653 394.3 l2.5 -3" stroke="#6f6f6f" stroke-width="0.5" fill="none" /><path d="M662 394.3 l2.5 -3" stroke="#6f6f6f" stroke-width="0.5" fill="none" /><path d="M671 394.3 l2.5 -3" stroke="#6f6f6f" stroke-width="0.5" fill="none" /><path d="M680 394.3 l2.5 -3" stroke="#6f6f6f" stroke-width="0.5" fill="none" /><path d="M689 394.3 l2.5 -3" stroke="#6f6f6f" stroke-width="0.5" fill="none" /><path d="M698 394.3 l2.5 -3" stroke="#6f6f6f" stroke-width="0.5" fill="none" /><path d="M707 394.3 l2.5 -3" stroke="#6f6f6f" stroke-width="0.5" fill="none" /><path d="M716 394.3 l2.5 -3" stroke="#6f6f6f" stroke-width="0.5" fill="none" /><path d="M725 394.3 l2.5 -3" stroke="#6f6f6f" stroke-width="0.5" fill="none" /><path d="M734 394.3 l2.5 -3" stroke="#6f6f6f" stroke-width="0.5" fill="none" /><path d="M743 394.3 l2.5 -3" stroke="#6f6f6f" stroke-width="0.5" fill="none" /><path d="M752 394.3 l2.5 -3" stroke="#6f6f6f" stroke-width="0.5" fill="none" /><path d="M761 394.3 l2.5 -3" stroke="#6f6f6f" stroke-width="0.5" fill="none" /><path d="M770 394.3 l2.5 -3" stroke="#6f6f6f" stroke-width="0.5" fill="none" /><path d="M779 394.3 l2.5 -3" stroke="#6f6f6f" stroke-width="0.5" fill="none" /><path d="M788 394.3 l2.5 -3" stroke="#6f6f6f" stroke-width="0.5" fill="none" /><path d="M797 394.3 l2.5 -3" stroke="#6f6f6f" stroke-width="0.5" fill="none" /><path d="M806 394.3 l2.5 -3" stroke="#6f6f6f" stroke-width="0.5" fill="none" /><path d="M815 394.3 l2.5 -3" stroke="#6f6f6f" stroke-width="0.5" fill="none" /><path d="M824 394.3 l2.5 -3" stroke="#6f6f6f" stroke-width="0.5" fill="none" /><path d="M833 394.3 l2.5 -3" stroke="#6f6f6f" stroke-width="0.5" fill="none" /><path d="M842 394.3 l2.5 -3" stroke="#6f6f6f" stroke-width="0.5" fill="none" /><path d="M851 394.3 l2.5 -3" stroke="#6f6f6f" stroke-width="0.5" fill="none" /><path d="M860 394.3 l2.5 -3" stroke="#6f6f6f" stroke-width="0.5" fill="none" /><path d="M869 394.3 l2.5 -3" stroke="#6f6f6f" stroke-width="0.5" fill="none" /><path d="M878 394.3 l2.5 -3" stroke="#6f6f6f" stroke-width="0.5" fill="none" /><path d="M887 394.3 l2.5 -3" stroke="#6f6f6f" stroke-width="0.5" fill="none" /><path d="M896 394.3 l2.5 -3" stroke="#6f6f6f" stroke-width="0.5" fill="none" /><path d="M905 394.3 l2.5 -3" stroke="#6f6f6f" stroke-width="0.5" fill="none" /><path d="M914 394.3 l2.5 -3" stroke="#6f6f6f" stroke-width="0.5" fill="none" /><path d="M923 394.3 l2.5 -3" stroke="#6f6f6f" stroke-width="0.5" fill="none" /><path d="M932 394.3 l2.5 -3" stroke="#6f6f6f" stroke-width="0.5" fill="none" /><path d="M941 394.3 l2.5 -3" stroke="#6f6f6f" stroke-width="0.5" fill="none" /><path d="M950 394.3 l2.5 -3" stroke="#6f6f6f" stroke-width="0.5" fill="none" /><path d="M959 394.3 l2.5 -3" stroke="#6f6f6f" stroke-width="0.5" fill="none" /><path d="M968 394.3 l2.5 -3" stroke="#6f6f6f" stroke-width="0.5" fill="none" /><path d="M977 394.3 l2.5 -3" stroke="#6f6f6f" stroke-width="0.5" fill="none" /><path d="M986 394.3 l2.5 -3" stroke="#6f6f6f" stroke-width="0.5" fill="none" /><path d="M995 394.3 l2.5 -3" stroke="#6f6f6f" stroke-width="0.5" fill="none" /><path d="M1004 394.3 l2.5 -3" stroke="#6f6f6f" stroke-width="0.5" fill="none" /><path d="M1013 394.3 l2.5 -3" stroke="#6f6f6f" stroke-width="0.5" fill="none" /><path d="M1022 394.3 l2.5 -3" stroke="#6f6f6f" stroke-width="0.5" fill="none" /><path d="M1031 394.3 l2.5 -3" stroke="#6f6f6f" stroke-width="0.5" fill="none" /><path d="M409.0 390.4 V382.6 H448.5 V390.4" stroke="#8c8c8c" stroke-width="0.6" fill="none" /><path d="M410.5 385 L424.5 374 Q431.5 379 431.5 390" stroke="#8c8c8c" stroke-width="0.6" fill="none" /><path d="M409.5 383 v8 M431.5 383 v8" stroke="#9a9a9a" stroke-width="1.1" fill="none" /><path d="M488.20000000000005 390.4 V382.6 H527.8000000000001 V390.4" stroke="#8c8c8c" stroke-width="0.6" fill="none" /><path d="M526.8000000000001 385 L512.2 374 Q504.20000000000005 379 504.20000000000005 390" stroke="#8c8c8c" stroke-width="0.6" fill="none" /><path d="M504.20000000000005 383 v8 M527.8000000000001 383 v8" stroke="#9a9a9a" stroke-width="1.1" fill="none" /><path d="M568.3 390.4 V382.6 H607.8 V390.4" stroke="#8c8c8c" stroke-width="0.6" fill="none" /><path d="M569.8 385 L583.8 374 Q590.8 379 590.8 390" stroke="#8c8c8c" stroke-width="0.6" fill="none" /><path d="M568.8 383 v8 M590.8 383 v8" stroke="#9a9a9a" stroke-width="1.1" fill="none" /><path d="M647.3 390.4 V382.6 H686.9 V390.4" stroke="#8c8c8c" stroke-width="0.6" fill="none" /><path d="M685.9 385 L671.3 374 Q663.3 379 663.3 390" stroke="#8c8c8c" stroke-width="0.6" fill="none" /><path d="M663.3 383 v8 M686.9 383 v8" stroke="#9a9a9a" stroke-width="1.1" fill="none" /><path d="M724.9 390.4 V382.6 H764.4 V390.4" stroke="#8c8c8c" stroke-width="0.6" fill="none" /><path d="M726.4 385 L740.4 374 Q747.4 379 747.4 390" stroke="#8c8c8c" stroke-width="0.6" fill="none" /><path d="M725.4 383 v8 M747.4 383 v8" stroke="#9a9a9a" stroke-width="1.1" fill="none" /><path d="M804.3 390.4 V382.6 H843.9 V390.4" stroke="#8c8c8c" stroke-width="0.6" fill="none" /><path d="M842.9 385 L828.3 374 Q820.3 379 820.3 390" stroke="#8c8c8c" stroke-width="0.6" fill="none" /><path d="M820.3 383 v8 M843.9 383 v8" stroke="#9a9a9a" stroke-width="1.1" fill="none" /><path d="M893.5 390.4 V382.6 H933 V390.4" stroke="#8c8c8c" stroke-width="0.6" fill="none" /><path d="M895 385 L909 374 Q916 379 916 390" stroke="#8c8c8c" stroke-width="0.6" fill="none" /><path d="M894 383 v8 M916 383 v8" stroke="#9a9a9a" stroke-width="1.1" fill="none" /><path d="M986 390.4 V382.6 H1025.6 V390.4" stroke="#8c8c8c" stroke-width="0.6" fill="none" /><path d="M1024.6 385 L1010 374 Q1002 379 1002 390" stroke="#8c8c8c" stroke-width="0.6" fill="none" /><path d="M1002 383 v8 M1025.6 383 v8" stroke="#9a9a9a" stroke-width="1.1" fill="none" /><path d="M452 391 H485" stroke="#9c9c9c" stroke-width="1.4" fill="none" /><path d="M449 385.6 V391 M488 385.6 V391" stroke="#8c8c8c" stroke-width="0.5" fill="none" /><path d="M611.6 391 H643.7" stroke="#9c9c9c" stroke-width="1.4" fill="none" /><path d="M608.6 385.6 V391 M646.7 385.6 V391" stroke="#8c8c8c" stroke-width="0.5" fill="none" /><path d="M768 391 H800" stroke="#9c9c9c" stroke-width="1.4" fill="none" /><path d="M765 385.6 V391 M803 385.6 V391" stroke="#8c8c8c" stroke-width="0.5" fill="none" /><path d="M945 391 H980" stroke="#9c9c9c" stroke-width="1.4" fill="none" /><path d="M942 385.6 V391 M983 385.6 V391" stroke="#8c8c8c" stroke-width="0.5" fill="none" /><path d="M388.7 399 V494" stroke="#8a8a8a" stroke-width="0.6" fill="none" /><path d="M428 203.5 H897 Q900.5 203.5 900.5 207 V223 Q900.5 226.7 904 226.7 H910" stroke="#6b8fe0" stroke-width="0.75" fill="none" /><path d="M431.5 207.8 H896.2 V223 Q896.2 231 904 231 H910" stroke="#6b8fe0" stroke-width="0.75" fill="none" /><path d="M432 205.65 H893" stroke="#6b8fe0" stroke-width="0.5" fill="none" stroke-dasharray="22 3 8 3"/><path d="M898.35 208 V224 Q898.35 228.8 904 228.8 H910" stroke="#6b8fe0" stroke-width="0.45" fill="none" /><path d="M423.4 292 V208.5 Q423.4 203.5 428.4 203.5" stroke="#6b8fe0" stroke-width="0.75" fill="none" /><path d="M429 292 V210.5 Q429 207.8 431.7 207.8" stroke="#6b8fe0" stroke-width="0.75" fill="none" /><path d="M426.2 292 V209.5 Q426.2 205.65 430 205.65" stroke="#6b8fe0" stroke-width="0.45" fill="none" /><path d="M502.7 207.8 V292 M508.3 207.8 V292" stroke="#6b8fe0" stroke-width="0.75" fill="none" /><path d="M504.9 207.8 V292 M506.1 207.8 V292" stroke="#6b8fe0" stroke-width="0.4" fill="none" /><path d="M501.5 202.5 V209 M509.5 202.5 V209" stroke="#6b8fe0" stroke-width="0.6" fill="none" /><path d="M616.5 207.8 V272 M622.0999999999999 207.8 V272" stroke="#6b8fe0" stroke-width="0.75" fill="none" /><path d="M618.6999999999999 207.8 V272 M619.9 207.8 V272" stroke="#6b8fe0" stroke-width="0.4" fill="none" /><path d="M615.3 202.5 V209 M623.3 202.5 V209" stroke="#6b8fe0" stroke-width="0.6" fill="none" /><path d="M778.7 207.8 V273 M784.3 207.8 V273" stroke="#6b8fe0" stroke-width="0.75" fill="none" /><path d="M780.9 207.8 V273 M782.1 207.8 V273" stroke="#6b8fe0" stroke-width="0.4" fill="none" /><path d="M777.5 202.5 V209 M785.5 202.5 V209" stroke="#6b8fe0" stroke-width="0.6" fill="none" /><path d="M582.0 292 V275.8 Q582.0 271.8 586.0 271.8 H662.3 Q666.3 271.8 666.3 275.8 V292" stroke="#6b8fe0" stroke-width="0.75" fill="none" /><path d="M587.5999999999999 292 V277.3 Q587.5999999999999 276.1 588.8 276.1 H659.5 Q660.7 276.1 660.7 277.3 V292" stroke="#6b8fe0" stroke-width="0.75" fill="none" /><path d="M584.8 292 V276.3 Q584.8 273.95 587.3 273.95 H661.0 Q663.5 273.95 663.5 276.3 V292" stroke="#6b8fe0" stroke-width="0.45" fill="none" /><path d="M620.15 270.8 V277.1 M628.15 270.8 V277.1" stroke="#6b8fe0" stroke-width="0.6" fill="none" /><path d="M740.2 292 V277 Q740.2 273 744.2 273 H820.3 Q824.3 273 824.3 277 V292" stroke="#6b8fe0" stroke-width="0.75" fill="none" /><path d="M745.8 292 V278.5 Q745.8 277.3 747 277.3 H817.5 Q818.7 277.3 818.7 278.5 V292" stroke="#6b8fe0" stroke-width="0.75" fill="none" /><path d="M743 292 V277.5 Q743 275.15 745.5 275.15 H819.0 Q821.5 275.15 821.5 277.5 V292" stroke="#6b8fe0" stroke-width="0.45" fill="none" /><path d="M778.25 272 V278.3 M786.25 272 V278.3" stroke="#6b8fe0" stroke-width="0.6" fill="none" /><rect x="416.7" y="302" width="19.5" height="17.7" fill="none" stroke="#6b8fe0" stroke-width="0.9"/><rect x="419.7" y="304.6" width="13.2" height="12.2" fill="none" stroke="#6b8fe0" stroke-width="0.8"/><ellipse cx="426.2" cy="311.3" rx="3.5" ry="3" fill="none" stroke="#6b8fe0" stroke-width="0.8"/><rect x="423.59999999999997" y="283.5" width="5.2" height="5" fill="#212830"/><path d="M427.7 284 h-3 v1.8 h3 v1.8 h-3" stroke="#d8dce8" stroke-width="0.6" fill="none"/><path d="M423.7 292 h5 M424.2 292 v10 M428.2 292 v10 M424.2 296 l4 3 M428.2 296 l-4 3" stroke="#6b8fe0" stroke-width="0.7" fill="none"/><rect x="496.0" y="302" width="19.5" height="17.7" fill="none" stroke="#6b8fe0" stroke-width="0.9"/><rect x="499.0" y="304.6" width="13.2" height="12.2" fill="none" stroke="#6b8fe0" stroke-width="0.8"/><ellipse cx="505.5" cy="311.3" rx="3.5" ry="3" fill="none" stroke="#6b8fe0" stroke-width="0.8"/><rect x="502.9" y="283.5" width="5.2" height="5" fill="#212830"/><path d="M507.0 284 h-3 v1.8 h3 v1.8 h-3" stroke="#d8dce8" stroke-width="0.6" fill="none"/><path d="M503.0 292 h5 M503.5 292 v10 M507.5 292 v10 M503.5 296 l4 3 M507.5 296 l-4 3" stroke="#6b8fe0" stroke-width="0.7" fill="none"/><rect x="575.3" y="302" width="19.5" height="17.7" fill="none" stroke="#6b8fe0" stroke-width="0.9"/><rect x="578.3" y="304.6" width="13.2" height="12.2" fill="none" stroke="#6b8fe0" stroke-width="0.8"/><ellipse cx="584.8" cy="311.3" rx="3.5" ry="3" fill="none" stroke="#6b8fe0" stroke-width="0.8"/><rect x="582.1999999999999" y="283.5" width="5.2" height="5" fill="#212830"/><path d="M586.3 284 h-3 v1.8 h3 v1.8 h-3" stroke="#d8dce8" stroke-width="0.6" fill="none"/><path d="M582.3 292 h5 M582.8 292 v10 M586.8 292 v10 M582.8 296 l4 3 M586.8 296 l-4 3" stroke="#6b8fe0" stroke-width="0.7" fill="none"/><rect x="654.0" y="302" width="19.5" height="17.7" fill="none" stroke="#6b8fe0" stroke-width="0.9"/><rect x="657.0" y="304.6" width="13.2" height="12.2" fill="none" stroke="#6b8fe0" stroke-width="0.8"/><ellipse cx="663.5" cy="311.3" rx="3.5" ry="3" fill="none" stroke="#6b8fe0" stroke-width="0.8"/><rect x="660.9" y="283.5" width="5.2" height="5" fill="#212830"/><path d="M665.0 284 h-3 v1.8 h3 v1.8 h-3" stroke="#d8dce8" stroke-width="0.6" fill="none"/><path d="M661.0 292 h5 M661.5 292 v10 M665.5 292 v10 M661.5 296 l4 3 M665.5 296 l-4 3" stroke="#6b8fe0" stroke-width="0.7" fill="none"/><rect x="733.5" y="302" width="19.5" height="17.7" fill="none" stroke="#6b8fe0" stroke-width="0.9"/><rect x="736.5" y="304.6" width="13.2" height="12.2" fill="none" stroke="#6b8fe0" stroke-width="0.8"/><ellipse cx="743" cy="311.3" rx="3.5" ry="3" fill="none" stroke="#6b8fe0" stroke-width="0.8"/><rect x="740.4" y="283.5" width="5.2" height="5" fill="#212830"/><path d="M744.5 284 h-3 v1.8 h3 v1.8 h-3" stroke="#d8dce8" stroke-width="0.6" fill="none"/><path d="M740.5 292 h5 M741 292 v10 M745 292 v10 M741 296 l4 3 M745 296 l-4 3" stroke="#6b8fe0" stroke-width="0.7" fill="none"/><rect x="812.0" y="302" width="19.5" height="17.7" fill="none" stroke="#6b8fe0" stroke-width="0.9"/><rect x="815.0" y="304.6" width="13.2" height="12.2" fill="none" stroke="#6b8fe0" stroke-width="0.8"/><ellipse cx="821.5" cy="311.3" rx="3.5" ry="3" fill="none" stroke="#6b8fe0" stroke-width="0.8"/><rect x="818.9" y="283.5" width="5.2" height="5" fill="#212830"/><path d="M823.0 284 h-3 v1.8 h3 v1.8 h-3" stroke="#d8dce8" stroke-width="0.6" fill="none"/><path d="M819.0 292 h5 M819.5 292 v10 M823.5 292 v10 M819.5 296 l4 3 M823.5 296 l-4 3" stroke="#6b8fe0" stroke-width="0.7" fill="none"/><rect x="466.3" y="302.3" width="13.5" height="11.5" fill="none" stroke="#888" stroke-width="0.6"/><path d="M469.3 306.3 h7 M468.3 310.3 h9" stroke="#777" stroke-width="0.5"/><rect x="616.5" y="308" width="13.5" height="11.5" fill="none" stroke="#888" stroke-width="0.6"/><path d="M619.5 312 h7 M618.5 316 h9" stroke="#777" stroke-width="0.5"/><rect x="777" y="303" width="13.5" height="11.5" fill="none" stroke="#888" stroke-width="0.6"/><path d="M780 307 h7 M779 311 h9" stroke="#777" stroke-width="0.5"/><rect x="609" y="202" width="19" height="12" fill="none" stroke="#777" stroke-width="0.6"/><path d="M875.5 410 V489" stroke="#8a8a8a" stroke-width="1.1" fill="none" stroke-dasharray="6 1"/><path d="M875.5 410 H1039" stroke="#8a8a8a" stroke-width="1.3" fill="none" stroke-dasharray="8 3 14 2"/><path d="M875.5 489 H1039" stroke="#8a8a8a" stroke-width="1.3" fill="none" stroke-dasharray="8 3 14 2"/><path d="M907.5 438.2 V460.2" stroke="#8a8a8a" stroke-width="1.0" fill="none" stroke-dasharray="6 1"/><path d="M907.5 438.2 H1039" stroke="#8a8a8a" stroke-width="1.2" fill="none" stroke-dasharray="5 3.7"/><path d="M907.5 460.2 H1039" stroke="#8a8a8a" stroke-width="1.2" fill="none" stroke-dasharray="5 3.7"/><path d="M907.5 410 V438 M907.5 460 V489" stroke="#8a8a8a" stroke-width="0.8" fill="none" stroke-dasharray="8 2 6 3"/><path d="M916.2 410 V438 M916.2 460 V489" stroke="#8a8a8a" stroke-width="0.8" fill="none" stroke-dasharray="8 2 6 3"/><path d="M924.9 410 V438 M924.9 460 V489" stroke="#8a8a8a" stroke-width="0.8" fill="none" stroke-dasharray="8 2 6 3"/><path d="M933.6 410 V438 M933.6 460 V489" stroke="#8a8a8a" stroke-width="0.8" fill="none" stroke-dasharray="8 2 6 3"/><path d="M942.3 410 V438 M942.3 460 V489" stroke="#8a8a8a" stroke-width="0.8" fill="none" stroke-dasharray="8 2 6 3"/><path d="M951.0 410 V438 M951.0 460 V489" stroke="#8a8a8a" stroke-width="0.8" fill="none" stroke-dasharray="8 2 6 3"/><path d="M959.7 410 V438 M959.7 460 V489" stroke="#8a8a8a" stroke-width="0.8" fill="none" stroke-dasharray="8 2 6 3"/><path d="M968.4 410 V438 M968.4 460 V489" stroke="#8a8a8a" stroke-width="0.8" fill="none" stroke-dasharray="8 2 6 3"/><path d="M977.1 410 V438 M977.1 460 V489" stroke="#8a8a8a" stroke-width="0.8" fill="none" stroke-dasharray="8 2 6 3"/><path d="M985.8 410 V438 M985.8 460 V489" stroke="#8a8a8a" stroke-width="0.8" fill="none" stroke-dasharray="8 2 6 3"/><path d="M994.5 410 V438 M994.5 460 V489" stroke="#8a8a8a" stroke-width="0.8" fill="none" stroke-dasharray="8 2 6 3"/><path d="M1003.2 410 V438 M1003.2 460 V489" stroke="#8a8a8a" stroke-width="0.8" fill="none" stroke-dasharray="8 2 6 3"/><path d="M1011.9 410 V438 M1011.9 460 V489" stroke="#8a8a8a" stroke-width="0.8" fill="none" stroke-dasharray="8 2 6 3"/><path d="M1020.6 410 V438 M1020.6 460 V489" stroke="#8a8a8a" stroke-width="0.8" fill="none" stroke-dasharray="8 2 6 3"/><path d="M1029.3 410 V438 M1029.3 460 V489" stroke="#8a8a8a" stroke-width="0.8" fill="none" stroke-dasharray="8 2 6 3"/><path d="M1038.0 410 V438 M1038.0 460 V489" stroke="#8a8a8a" stroke-width="0.8" fill="none" stroke-dasharray="8 2 6 3"/><rect x="885.4" y="419.5" width="8.8" height="7.5" fill="none" stroke="#8a8a8a" stroke-width="0.8"/><rect x="885.4" y="471.5" width="8.8" height="7.5" fill="none" stroke="#8a8a8a" stroke-width="0.8"/><path d="M1013.3 394 V410" stroke="#8a8a8a" stroke-width="1.0" fill="none" /><path d="M926.3 125 V141 M931.6 125 V141" stroke="#c65e5a" stroke-width="0.9" fill="none" /><rect x="962" y="136" width="24.6" height="8" fill="none" stroke="#888" stroke-width="0.7"/><path d="M1031 173.9 H1039 M1031 177.8 H1039 M1031 207 H1039 M1031 211 H1039 M1031 250 H1039" stroke="#c65e5a" stroke-width="0.9" fill="none" /><path d="M1031 226 H1039 M1031 241 H1039" stroke="#777" stroke-width="0.7" fill="none" /><rect x="1031" y="187" width="6" height="10" fill="none" stroke="#888" stroke-width="0.6"/><rect x="1030.8" y="225" width="5.5" height="142" fill="#2e333a" stroke="#666" stroke-width="0.6"/></g><path d="M782.3 356.5 V364 L784 362.5 L785.5 365.5 L786.5 365 L785 362 L787.3 362 z" fill="#fff" stroke="#222" stroke-width="0.4"/><rect x="907" y="140.7" width="124" height="237.7" fill="#3c3c3c"/><rect x="907" y="140.7" width="124" height="17.5" fill="#4a4a4a"/><path d="M1019.5 148 h5 l-2.5 2.6z" fill="#ccc"/><rect x="909.3" y="158.6" width="119.5" height="12" fill="#3a3a3a" stroke="#4caf50" stroke-width="0.8"/><rect x="1014" y="158.6" width="14.8" height="12" fill="#4caf5c"/><circle cx="1020" cy="163.6" r="2.6" fill="none" stroke="#fff" stroke-width="1.2"/><path d="M1022 165.6 l2.8 2.8" stroke="#fff" stroke-width="1.5"/><rect x="909.3" y="172.1" width="119.5" height="12.6" fill="#4caa5a"/><rect x="909.3" y="186" width="58.6" height="53" fill="#7a4fb6"/><rect x="969" y="186" width="59.8" height="26" fill="#7a4fb6"/><rect x="969" y="213.2" width="59.8" height="12.3" fill="#7a4fb6"/><rect x="969" y="227" width="59.8" height="12" fill="#7a4fb6"/><path d="M917 223 l8 -3 l9 3 l-8 3z M917 226 l8 -3 l9 3 l-8 3z M917 229 l8 -3 l9 3 l-8 3z" fill="#9a86c8" stroke="#c8b8e8" stroke-width="0.5"/><rect x="928" y="228" width="4" height="6" fill="#6a5aa0" stroke="#c8b8e8" stroke-width="0.5"/><rect x="946" y="220" width="10" height="8" fill="#6a5aa0" stroke="#c8b8e8" stroke-width="0.5"/><rect x="940" y="226" width="10" height="7" fill="#8a76c0" stroke="#c8b8e8" stroke-width="0.5"/><path d="M955 226 l3 -3 l3 3 M958 223 v8" stroke="#4a7ad8" stroke-width="1.2" fill="none"/><rect x="909.5" y="240.6" width="119.2" height="25.4" fill="#4d96d6"/><rect x="909.5" y="267.7" width="58.4" height="26" fill="#4d96d6"/><rect x="969" y="267.7" width="59.7" height="26" fill="#4d96d6"/><rect x="909.5" y="294.8" width="58.4" height="26" fill="#4d96d6"/><rect x="969" y="294.8" width="59.7" height="26" fill="#4d96d6"/><rect x="909.5" y="322" width="58.4" height="27" fill="#4d96d6"/><rect x="969" y="322" width="59.7" height="27" fill="#4d96d6"/><rect x="909.5" y="350.6" width="119.2" height="25.4" fill="#4d96d6"/><rect x="975" y="245" width="3.5" height="17" rx="1" fill="#4cc070"/><rect x="975" y="249" width="3.5" height="8" fill="#9a5ac0"/><rect x="978.5" y="250.5" width="14" height="3.5" rx="1" fill="#4cc070"/><rect x="978.5" y="250.5" width="4" height="3.5" fill="#9a5ac0"/><rect x="1005" y="245" width="3.5" height="17" rx="1" fill="#4cc070"/><rect x="1005" y="249" width="3.5" height="8" fill="#9a5ac0"/><rect x="1008.5" y="250.5" width="14" height="3.5" rx="1" fill="#4cc070"/><rect x="1008.5" y="250.5" width="4" height="3.5" fill="#9a5ac0"/><path d="M985.5 255.5 l6 6 M991.5 255.5 l-6 6" stroke="#d8ecfc" stroke-width="1.1"/><path d="M1015 258.5 h7 M1018.5 255 v7" stroke="#d8ecfc" stroke-width="1.2"/><path d="M1001 135.5 h6" stroke="#ddd" stroke-width="1.3"/><rect x="1012.5" y="132" width="5" height="4.5" fill="none" stroke="#ddd" stroke-width="1"/><path d="M1014 132 v-1.5 h5 v4.5 h-1.5" fill="none" stroke="#ddd" stroke-width="0.9"/><path d="M1025 130.5 l5 5 M1030 130.5 l-5 5" stroke="#ddd" stroke-width="1.2"/><rect x="324.3" y="480.2" width="708.7" height="13.6" fill="#c4c4c4" fill-opacity="0.92"/><rect x="324.3" y="480.2" width="35" height="13.6" fill="#b4b4b4" fill-opacity="0.92"/><path d="M327 482.5 v9 M329 482.5 v9" stroke="#888" stroke-width="1" stroke-dasharray="1 1"/><path d="M334 484.5 l4.5 4.5 M338.5 484.5 l-4.5 4.5" stroke="#555" stroke-width="0.9"/><path d="M346.5 491.5 l4 -4" stroke="#888" stroke-width="1.3"/><path d="M350 486.5 a2.3 2.3 0 1 1 2.5 1.5" stroke="#888" stroke-width="1" fill="none"/><rect x="362" y="484" width="9" height="6" fill="none" stroke="#666" stroke-width="0.8"/><path d="M362 485.5 h9" stroke="#666" stroke-width="0.8"/><path d="M372.5 486.5 h3.5 l-1.75 2z" fill="#555"/><path d="M1027.5 488 l2 -2 l2 2" stroke="#444" stroke-width="0.7" fill="none"/><path d="M124 500.3 h10 M124 503 h10 M124 505.7 h10" stroke="#555" stroke-width="0.9"/><path d="M139.9 509 l4.6 -13.2 h37.5 l-4.6 13.2z" fill="#f3f3f3"/><path d="M216 508 l3 -10 M244 508 l3 -10" stroke="#bbb" stroke-width="0.6"/><path d="M225 502.5 h10 M230 497.5 v10" stroke="#444" stroke-width="1.1"/><rect x="115" y="512.5" width="97" height="14.5" fill="#f3f3f3"/><rect x="212.8" y="512.8" width="144.2" height="14" fill="#f7f7f7" stroke="#e0e0e0" stroke-width="0.5"/><rect x="357" y="512.8" width="30" height="14" fill="#f7f7f7" stroke="#e0e0e0" stroke-width="0.5"/><path d="M392 515 v9 M395 515 v9 M390 517.5 h8 M390 521 h8" stroke="#555" stroke-width="0.7"/><rect x="400.5" y="513" width="16.5" height="12.5" fill="#cfe3f7" stroke="#7ab0e0" stroke-width="0.7"/><circle cx="403.5" cy="515.8" r="0.7" fill="#1a5aa0"/><circle cx="403.5" cy="519.0" r="0.7" fill="#1a5aa0"/><circle cx="403.5" cy="522.1999999999999" r="0.7" fill="#1a5aa0"/><circle cx="406.8" cy="515.8" r="0.7" fill="#1a5aa0"/><circle cx="406.8" cy="519.0" r="0.7" fill="#1a5aa0"/><circle cx="406.8" cy="522.1999999999999" r="0.7" fill="#1a5aa0"/><circle cx="410.1" cy="515.8" r="0.7" fill="#1a5aa0"/><circle cx="410.1" cy="519.0" r="0.7" fill="#1a5aa0"/><circle cx="410.1" cy="522.1999999999999" r="0.7" fill="#1a5aa0"/><circle cx="413.4" cy="515.8" r="0.7" fill="#1a5aa0"/><circle cx="413.4" cy="519.0" r="0.7" fill="#1a5aa0"/><circle cx="413.4" cy="522.1999999999999" r="0.7" fill="#1a5aa0"/><path d="M420.5 518.5 h4 l-2 2.2z" fill="#555"/><rect x="431" y="519.5" width="4.5" height="4.5" fill="#444"/><rect x="436.5" y="514.5" width="6" height="5" fill="none" stroke="#555" stroke-width="0.8"/><rect x="444.5" y="513" width="13.5" height="12.5" fill="#cfe3f7" stroke="#7ab0e0" stroke-width="0.7"/><path d="M448 515 v6 M446.5 518 h3" stroke="#333" stroke-width="0.8"/><path d="M449.5 521.5 h6.5" stroke="#333" stroke-width="1.6"/><path d="M462.5 515 v8.5 h9.5 M462.5 521 h3" stroke="#888" stroke-width="0.8" fill="none"/><rect x="474.5" y="513" width="14.0" height="12.5" fill="#cfe3f7" stroke="#7ab0e0" stroke-width="0.7"/><path d="M485 516.5 A4.5 4.5 0 1 0 486 520" fill="none" stroke="#555" stroke-width="0.9"/><path d="M478 522.5 l7.5 -6.5 M483 516 h3 v3" stroke="#555" stroke-width="0.8" fill="none"/><path d="M492 518.5 h4 l-2 2.2z" fill="#555"/><path d="M502 515 l7 9 M509 515 l-7 9" stroke="#cc3333" stroke-width="0.8"/><path d="M505.5 515 v9" stroke="#3a9a4a" stroke-width="0.8"/><path d="M515 518.5 h4 l-2 2.2z" fill="#555"/><rect x="523.5" y="513" width="13.0" height="12.5" fill="#cfe3f7" stroke="#7ab0e0" stroke-width="0.7"/><path d="M526 523 l8 -7 M526 523 h8" stroke="#333" stroke-width="0.8"/><rect x="541" y="515" width="9" height="9" fill="none" stroke="#555" stroke-width="0.7"/><circle cx="541" cy="515" r="1.5" fill="#f08040"/><path d="M555 518.5 h4 l-2 2.2z" fill="#555"/><path d="M563 515.5 h10 M563 518.5 h8 M563 521.5 h10 M563 524 h6" stroke="#555" stroke-width="1"/><rect x="576" y="513" width="13" height="12.5" fill="#cfe3f7" stroke="#7ab0e0" stroke-width="0.7"/><rect x="578.5" y="515" width="8" height="8" fill="#555"/><rect x="578.5" y="515" width="1" height="1" fill="#ddd"/><rect x="578.5" y="519" width="1" height="1" fill="#ddd"/><rect x="580.5" y="517" width="1" height="1" fill="#ddd"/><rect x="580.5" y="521" width="1" height="1" fill="#ddd"/><rect x="582.5" y="515" width="1" height="1" fill="#ddd"/><rect x="582.5" y="519" width="1" height="1" fill="#ddd"/><rect x="584.5" y="517" width="1" height="1" fill="#ddd"/><rect x="584.5" y="521" width="1" height="1" fill="#ddd"/><rect x="596" y="518" width="7" height="6" fill="#3a9a4a"/><path d="M592 515 l4 3" stroke="#555" stroke-width="0.7"/><rect x="606" y="513" width="13" height="12.5" fill="#cfe3f7" stroke="#7ab0e0" stroke-width="0.7"/><rect x="608.5" y="516" width="8" height="7" fill="none" stroke="#1a5aa0" stroke-width="0.8"/><path d="M608.5 516 l2 -2 h8 v7 l-2 2" stroke="#1a5aa0" stroke-width="0.8" fill="none"/><path d="M623 518.5 h4 l-2 2.2z" fill="#555"/><rect x="631.5" y="513" width="13.5" height="12.5" fill="#cfe3f7" stroke="#7ab0e0" stroke-width="0.7"/><path d="M634 514.5 v9 h9 M634 518 l4 4 M639 515 v6" stroke="#1a5aa0" stroke-width="1"/><rect x="652" y="516" width="7" height="8" fill="none" stroke="#2a7ad0" stroke-width="0.8" stroke-dasharray="1.5 1"/><path d="M665.5 518.5 h4 l-2 2.2z" fill="#555"/><rect x="672" y="513" width="17" height="12.5" fill="#cfe3f7" stroke="#7ab0e0" stroke-width="0.7"/><circle cx="680.5" cy="519.5" r="4.5" fill="none" stroke="#555" stroke-width="0.8"/><path d="M676.5 521 l4 -5 l4 5z" fill="none" stroke="#555" stroke-width="0.7"/><path d="M691 518.5 h4 l-2 2.2z" fill="#555"/><rect x="697.5" y="513" width="13.5" height="12.5" fill="#cfe3f7" stroke="#7ab0e0" stroke-width="0.7"/><path d="M700 524 l4 -4 l3 -5 M703 518 h5" stroke="#1a4a8a" stroke-width="1.1" fill="none"/><path d="M715 524 l4 -4 l3 -5 M718 518 h5" stroke="#444" stroke-width="1" fill="none"/><path d="M731 524 l3 -8 l3 8 M734 516 v-2" stroke="#444" stroke-width="0.9" fill="none"/><path d="M778.5 518.5 h4 l-2 2.2z" fill="#555"/><circle cx="791.5" cy="519" r="3.8" fill="#555"/><circle cx="791.5" cy="519" r="1.5" fill="#f0f0f0"/><circle cx="796.00" cy="519.00" r="1.1" fill="#555"/><circle cx="794.68" cy="522.18" r="1.1" fill="#555"/><circle cx="791.50" cy="523.50" r="1.1" fill="#555"/><circle cx="788.32" cy="522.18" r="1.1" fill="#555"/><circle cx="787.00" cy="519.00" r="1.1" fill="#555"/><circle cx="788.32" cy="515.82" r="1.1" fill="#555"/><circle cx="791.50" cy="514.50" r="1.1" fill="#555"/><circle cx="794.68" cy="515.82" r="1.1" fill="#555"/><path d="M803 518.5 h4 l-2 2.2z" fill="#555"/><path d="M813 519 h10 M818 514 v10" stroke="#333" stroke-width="1"/><rect x="830" y="514" width="4" height="10" fill="#666"/><path d="M830.5 516 h3 M830.5 518 h3 M830.5 520 h3 M830.5 522 h3" stroke="#ddd" stroke-width="0.5"/><path d="M878.5 518.5 h4 l-2 2.2z" fill="#555"/><rect x="889" y="515" width="6.5" height="8" fill="none" stroke="#555" stroke-width="0.8"/><path d="M890 517.5 h4.5 M890 520 h4.5" stroke="#555" stroke-width="0.5"/><rect x="905" y="514.5" width="10" height="8" fill="none" stroke="#555" stroke-width="0.8"/><circle cx="912" cy="522" r="1.5" fill="#555"/><path d="M920.5 518.5 h4 l-2 2.2z" fill="#555"/><rect x="930" y="514.5" width="4" height="4" fill="none" stroke="#777" stroke-width="0.6"/><circle cx="936" cy="518.5" r="1.8" fill="none" stroke="#777" stroke-width="0.6"/><path d="M931 524 l2 -3 l2 3z" fill="none" stroke="#777" stroke-width="0.6"/><rect x="944" y="513" width="14" height="12.5" fill="#cfe3f7" stroke="#7ab0e0" stroke-width="0.7"/><circle cx="951" cy="519.5" r="4.5" fill="#9aa4b0" stroke="#555" stroke-width="0.7"/><path d="M948 522 l6 -5" stroke="#333" stroke-width="0.5"/><rect x="961" y="515" width="8" height="6" fill="#2a6ad8"/><rect x="962" y="518" width="6" height="3" fill="#f0a020"/><path d="M964 522 l2 2 l4 -4" stroke="#3a9a4a" stroke-width="1.2" fill="none"/><path d="M977 515 v8 h9 v-4 l-3 -2 h-3 l-2 -2" stroke="#f08030" stroke-width="0.8" fill="none"/><path d="M992 518 l5 -3 l5 3 l-5 3z M992 521 l5 3 l5 -3" stroke="#666" stroke-width="0.7" fill="none"/><path d="M997 524 l2.5 -4 l2.5 4z" fill="#f07020"/><rect x="1010" y="515" width="10" height="8" fill="none" stroke="#555" stroke-width="0.8"/><path d="M1012 521 l6 -4" stroke="#555" stroke-width="0.7"/><path d="M1025 515.5 h10 M1025 519 h10 M1025 522.5 h10" stroke="#444" stroke-width="1.1"/><path d="M388.5 513 v12.5" stroke="#e0e0e0" stroke-width="0.6"/><path d="M427.5 513 v12.5" stroke="#e0e0e0" stroke-width="0.6"/><path d="M537.5 513 v12.5" stroke="#e0e0e0" stroke-width="0.6"/><path d="M560.5 513 v12.5" stroke="#e0e0e0" stroke-width="0.6"/><path d="M627.5 513 v12.5" stroke="#e0e0e0" stroke-width="0.6"/><path d="M647.5 513 v12.5" stroke="#e0e0e0" stroke-width="0.6"/><path d="M715 513 v12.5" stroke="#e0e0e0" stroke-width="0.6"/><path d="M770 513 v12.5" stroke="#e0e0e0" stroke-width="0.6"/><path d="M784 513 v12.5" stroke="#e0e0e0" stroke-width="0.6"/><path d="M808 513 v12.5" stroke="#e0e0e0" stroke-width="0.6"/><path d="M825.5 513 v12.5" stroke="#e0e0e0" stroke-width="0.6"/><path d="M884.5 513 v12.5" stroke="#e0e0e0" stroke-width="0.6"/><path d="M900 513 v12.5" stroke="#e0e0e0" stroke-width="0.6"/><path d="M926.5 513 v12.5" stroke="#e0e0e0" stroke-width="0.6"/><path d="M940.5 513 v12.5" stroke="#e0e0e0" stroke-width="0.6"/><path d="M1005.5 513 v12.5" stroke="#e0e0e0" stroke-width="0.6"/><path d="M1022 513 v12.5" stroke="#e0e0e0" stroke-width="0.6"/><path d="M124.5 533 l4.5 -0.6 v4.3 h-4.5z M129.8 532.3 l5.2 -0.8 v5.2 h-5.2z M124.5 537.6 h4.5 v4.3 l-4.5 -0.6z M129.8 537.6 h5.2 v5.2 l-5.2 -0.8z" fill="#fff"/><circle cx="159" cy="536" r="3.3" fill="none" stroke="#eee" stroke-width="0.9"/><path d="M156.5 538.5 l-3.5 3.5" stroke="#eee" stroke-width="1"/><rect x="182" y="533.5" width="5.5" height="6.5" fill="none" stroke="#eee" stroke-width="0.8"/><path d="M181 533 h1 M181 540.5 h1 M189.5 532.5 v9 M191 534 v6" stroke="#eee" stroke-width="0.8"/><ellipse cx="218" cy="536.5" rx="7" ry="4" transform="rotate(-30 218 536.5)" fill="none" stroke="#e8c020" stroke-width="1"/><text x="218" y="542.6" font-size="16.5" font-family="Liberation Sans" font-weight="bold" fill="#3aa8f0" text-anchor="middle">e</text><path d="M240.5 533 h5 l1.5 1.5 h7.2 v8 h-13.7z" fill="#f6cf6a"/><rect x="240.5" y="535.5" width="13.7" height="7" fill="#fbe08e"/><rect x="244.5" y="539" width="5.5" height="3.5" fill="#3a90d8"/><rect x="269.5" y="531" width="5.5" height="10" fill="#4a9ae0"/><rect x="270.5" y="533" width="3.5" height="1" fill="#cfe6fa"/><rect x="272" y="537.5" width="13" height="5.5" fill="#c0cad4" stroke="#8a9aa8" stroke-width="0.6"/><path d="M274 540.5 h9" stroke="#7a8a98" stroke-width="0.8"/><rect x="299.2" y="531" width="14.8" height="12" fill="#fafafa"/><path d="M302 537 l4 -3 l5 1 v4 l-4 3 l-5 -1z" fill="#2a6ab8"/><path d="M306 534 v8 M302 537 l5 1 l4 -3" stroke="#fff" stroke-width="0.6" fill="none"/><rect x="330.6" y="530.6" width="13.2" height="12.8" fill="#1a5ad8" rx="1.5"/><rect x="331.5" y="540.5" width="11.5" height="2.9" fill="#0a3a98"/><text x="337.2" y="538.6" font-size="8" font-family="Liberation Sans" font-weight="bold" fill="#fff" text-anchor="middle">R</text><rect x="352" y="527" width="29.8" height="21" fill="#3a3a3a"/><rect x="359.5" y="530.6" width="13.2" height="12.8" fill="#dc1e46" rx="1"/><rect x="359.5" y="540.5" width="13.2" height="2.9" fill="#8a0a24"/><path d="M363.3 539 l2.8 -6.5 l2.8 6.5 M364.4 536.6 h3.4" stroke="#fff" stroke-width="1.2" fill="none"/><rect x="235.5" y="547.3" width="24.5" height="1.7" fill="#6a9ad0"/><rect x="265.5" y="547.3" width="24.5" height="1.7" fill="#6a9ad0"/><rect x="295" y="547.3" width="25" height="1.7" fill="#6a9ad0"/><rect x="324.5" y="547.3" width="24.5" height="1.7" fill="#6a9ad0"/><rect x="352" y="547.3" width="29.80000000000001" height="1.7" fill="#6a9ad0"/><path d="M927 537 l3.5 -3.5 l3.5 3.5" stroke="#eee" stroke-width="0.8" fill="none"/><rect x="941" y="533" width="8" height="5.5" fill="none" stroke="#ddd" stroke-width="0.8"/><path d="M945 538.5 v3 M942.5 541.5 h5 M940 534 v6" stroke="#ddd" stroke-width="0.8"/><path d="M955 534.5 h2 l2 -1.5 v6 l-2 -1.5 h-2z" fill="none" stroke="#ddd" stroke-width="0.7"/><circle cx="961.5" cy="538.5" r="1.6" fill="#e02020"/><path d="M1014 532.5 h9.5 v7 h-5 l-3 2.5 v-2.5 h-1.5z" fill="none" stroke="#ddd" stroke-width="0.8"/></svg>
<div class="t" style="left:318.00px;top:29.10px;font-size:7.00px;line-height:8.40px;color:#1f7fd0;">Share</div>
<div class="t" style="left:407.50px;top:28.95px;font-size:7.08px;line-height:8.49px;color:#3a3a3a;">Autodesk AutoCAD 2024    MEP Before calculation.dwg</div>
<div class="t" style="left:661.00px;top:29.54px;font-size:6.60px;line-height:7.92px;color:#777;font-style:italic;">Type a keyword or phrase</div>
<div class="t" style="left:796.50px;top:29.04px;font-size:7.10px;line-height:8.52px;color:#333;">stefan_vanthof</div>
<div class="t" style="left:604.00px;width:600px;text-align:center;top:29.40px;font-size:6.50px;line-height:7.80px;color:#555;">?</div>
<div class="t" style="left:122.00px;top:44.89px;font-size:7.35px;line-height:8.82px;color:#3d3d3d;">Home</div>
<div class="t" style="left:154.00px;top:44.89px;font-size:7.35px;line-height:8.82px;color:#3d3d3d;">Insert</div>
<div class="t" style="left:183.60px;top:44.89px;font-size:7.35px;line-height:8.82px;color:#3d3d3d;">Annotate</div>
<div class="t" style="left:224.70px;top:44.89px;font-size:7.35px;line-height:8.82px;color:#3d3d3d;">View</div>
<div class="t" style="left:252.00px;top:44.89px;font-size:7.35px;line-height:8.82px;color:#3d3d3d;">Manage</div>
<div class="t" style="left:290.50px;top:44.89px;font-size:7.35px;line-height:8.82px;color:#3d3d3d;">Output</div>
<div class="t" style="left:324.00px;top:44.89px;font-size:7.35px;line-height:8.82px;color:#3d3d3d;">Add-ins</div>
<div class="t" style="left:362.00px;top:44.89px;font-size:7.35px;line-height:8.82px;color:#3d3d3d;">Collaborate</div>
<div class="t" style="left:411.30px;top:44.89px;font-size:7.35px;line-height:8.82px;color:#3d3d3d;">Featured Apps</div>
<div class="t" style="left:469.50px;top:44.89px;font-size:7.35px;line-height:8.82px;color:#3d3d3d;">Express Tools</div>
<div class="t" style="left:522.70px;top:44.89px;font-size:7.35px;line-height:8.82px;color:#3d3d3d;">MEPcontent</div>
<div class="t" style="left:-171.60px;width:600px;text-align:center;top:78.18px;font-size:7.20px;line-height:8.64px;color:#474747;">Line</div>
<div class="t" style="left:-145.85px;width:600px;text-align:center;top:78.18px;font-size:7.20px;line-height:8.64px;color:#474747;">Polyline</div>
<div class="t" style="left:-115.85px;width:600px;text-align:center;top:78.18px;font-size:7.20px;line-height:8.64px;color:#474747;">Circle</div>
<div class="t" style="left:-88.05px;width:600px;text-align:center;top:78.18px;font-size:7.20px;line-height:8.64px;color:#474747;">Arc</div>
<div class="t" style="left:-121.75px;width:600px;text-align:center;top:98.58px;font-size:7.04px;line-height:8.45px;color:#474747;">Draw</div>
<div class="t" style="left:-42.90px;width:600px;text-align:center;top:85.58px;font-size:7.20px;line-height:8.64px;color:#b5b5b5;">Create</div>
<div class="t" style="left:-43.50px;width:600px;text-align:center;top:93.38px;font-size:7.20px;line-height:8.64px;color:#b5b5b5;">Block</div>
<div class="t" style="left:-8.50px;width:600px;text-align:center;top:85.58px;font-size:7.20px;line-height:8.64px;color:#474747;">Define</div>
<div class="t" style="left:-8.40px;width:600px;text-align:center;top:93.18px;font-size:7.20px;line-height:8.64px;color:#474747;">Attributes</div>
<div class="t" style="left:27.10px;width:600px;text-align:center;top:85.58px;font-size:7.20px;line-height:8.64px;color:#474747;">Manage</div>
<div class="t" style="left:26.70px;width:600px;text-align:center;top:93.18px;font-size:7.20px;line-height:8.64px;color:#474747;">Attributes</div>
<div class="t" style="left:54.95px;width:600px;text-align:center;top:85.58px;font-size:7.20px;line-height:8.64px;color:#474747;">Block</div>
<div class="t" style="left:55.05px;width:600px;text-align:center;top:93.18px;font-size:7.20px;line-height:8.64px;color:#474747;">Editor</div>
<div class="t" style="left:3.30px;width:600px;text-align:center;top:104.88px;font-size:7.20px;line-height:8.64px;color:#474747;">Block Definition</div>
<div class="t" style="left:115.40px;width:600px;text-align:center;top:78.18px;font-size:7.20px;line-height:8.64px;color:#474747;">Text</div>
<div class="t" style="left:147.00px;width:600px;text-align:center;top:78.18px;font-size:7.20px;line-height:8.64px;color:#474747;">Dimension</div>
<div class="t" style="left:141.45px;width:600px;text-align:center;top:98.48px;font-size:7.20px;line-height:8.64px;color:#474747;">Annotation</div>
<div class="t" style="left:209.30px;width:600px;text-align:center;top:78.18px;font-size:7.20px;line-height:8.64px;color:#474747;">Layer</div>
<div class="t" style="left:209.20px;width:600px;text-align:center;top:86.08px;font-size:7.20px;line-height:8.64px;color:#474747;">Properties</div>
<div class="t" style="left:577.00px;top:59.60px;font-size:6.50px;line-height:7.80px;color:#444;">0</div>
<div class="t" style="left:267.75px;width:600px;text-align:center;top:98.67px;font-size:6.89px;line-height:8.26px;color:#474747;">Layers</div>
<div class="t" style="left:366.70px;width:600px;text-align:center;top:77.38px;font-size:7.20px;line-height:8.64px;color:#474747;">Insert</div>
<div class="t" style="left:373.50px;width:600px;text-align:center;top:98.48px;font-size:7.20px;line-height:8.64px;color:#474747;">Block</div>
<div class="t" style="left:421.05px;width:600px;text-align:center;top:78.18px;font-size:7.20px;line-height:8.64px;color:#474747;">Match</div>
<div class="t" style="left:420.85px;width:600px;text-align:center;top:86.08px;font-size:7.20px;line-height:8.64px;color:#474747;">Properties</div>
<div class="t" style="left:479.90px;width:600px;text-align:center;top:59.00px;font-size:6.99px;line-height:8.39px;color:#474747;">ByLayer</div>
<div class="t" style="left:507.75px;width:600px;text-align:center;top:71.75px;font-size:7.08px;line-height:8.50px;color:#474747;">ByLayer</div>
<div class="t" style="left:507.75px;width:600px;text-align:center;top:85.65px;font-size:7.08px;line-height:8.50px;color:#474747;">ByLayer</div>
<div class="t" style="left:461.00px;width:600px;text-align:center;top:98.48px;font-size:7.20px;line-height:8.64px;color:#474747;">Properties</div>
<div class="t" style="left:548.75px;width:600px;text-align:center;top:78.18px;font-size:7.20px;line-height:8.64px;color:#474747;">Group</div>
<div class="t" style="left:551.75px;width:600px;text-align:center;top:98.48px;font-size:7.20px;line-height:8.64px;color:#474747;">Groups</div>
<div class="t" style="left:598.40px;width:600px;text-align:center;top:78.08px;font-size:7.20px;line-height:8.64px;color:#474747;">Measure</div>
<div class="t" style="left:602.25px;width:600px;text-align:center;top:98.48px;font-size:7.20px;line-height:8.64px;color:#474747;">Utilities</div>
<div class="t" style="left:652.40px;width:600px;text-align:center;top:78.12px;font-size:7.13px;line-height:8.56px;color:#474747;">Paste</div>
<div class="t" style="left:662.65px;width:600px;text-align:center;top:98.48px;font-size:7.20px;line-height:8.64px;color:#474747;">Clipboard</div>
<div class="t" style="left:709.00px;width:600px;text-align:center;top:78.49px;font-size:6.51px;line-height:7.81px;color:#474747;">Base</div>
<div class="t" style="left:700.90px;width:600px;text-align:center;top:98.48px;font-size:7.20px;line-height:8.64px;color:#474747;">View</div>
<div class="t" style="left:149.30px;top:111.94px;font-size:6.77px;line-height:8.13px;color:#444;">Start</div>
<div class="t" style="left:178.50px;top:111.84px;font-size:6.94px;line-height:8.32px;color:#333;font-weight:bold;">MEF Before calculation*</div>
<div class="t" style="left:123.00px;top:127.10px;font-size:7.00px;line-height:8.40px;color:#555;letter-spacing:-0.35px;">PROPERTIES</div>
<div class="t" style="left:127.00px;top:145.14px;font-size:7.27px;line-height:8.72px;color:#333;">No selection</div>
<div class="t" style="left:127.30px;top:159.36px;font-size:6.90px;line-height:8.28px;color:#2a2a2a;font-weight:bold;">General</div>
<div class="t" style="left:139.70px;top:170.25px;font-size:6.75px;line-height:8.10px;color:#767676;">Color</div>
<div class="t" style="left:229.00px;top:170.25px;font-size:6.75px;line-height:8.10px;color:#3a3a3a;">ByLayer</div>
<div class="t" style="left:139.70px;top:180.63px;font-size:6.75px;line-height:8.10px;color:#767676;">Layer</div>
<div class="t" style="left:217.30px;top:180.63px;font-size:6.75px;line-height:8.10px;color:#3a3a3a;">0</div>
<div class="t" style="left:139.70px;top:191.03px;font-size:6.75px;line-height:8.10px;color:#767676;">Linetype</div>
<div class="t" style="left:259.00px;top:191.03px;font-size:6.75px;line-height:8.10px;color:#3a3a3a;">ByLayer</div>
<div class="t" style="left:139.70px;top:201.42px;font-size:6.75px;line-height:8.10px;color:#767676;">Linetype scale</div>
<div class="t" style="left:217.30px;top:201.42px;font-size:6.75px;line-height:8.10px;color:#3a3a3a;">1</div>
<div class="t" style="left:139.70px;top:211.81px;font-size:6.75px;line-height:8.10px;color:#767676;">Lineweight</div>
<div class="t" style="left:259.00px;top:211.81px;font-size:6.75px;line-height:8.10px;color:#3a3a3a;">ByLayer</div>
<div class="t" style="left:139.70px;top:222.19px;font-size:6.75px;line-height:8.10px;color:#767676;">Transparency</div>
<div class="t" style="left:217.30px;top:222.19px;font-size:6.75px;line-height:8.10px;color:#3a3a3a;">ByLayer</div>
<div class="t" style="left:139.70px;top:232.59px;font-size:6.75px;line-height:8.10px;color:#767676;">Thickness</div>
<div class="t" style="left:217.30px;top:232.59px;font-size:6.75px;line-height:8.10px;color:#3a3a3a;">0</div>
<div class="t" style="left:127.30px;top:244.06px;font-size:6.90px;line-height:8.28px;color:#2a2a2a;font-weight:bold;">3D Visualization</div>
<div class="t" style="left:139.70px;top:254.95px;font-size:6.75px;line-height:8.10px;color:#767676;">Material</div>
<div class="t" style="left:217.30px;top:254.95px;font-size:6.75px;line-height:8.10px;color:#3a3a3a;">ByLayer</div>
<div class="t" style="left:127.30px;top:267.06px;font-size:6.90px;line-height:8.28px;color:#2a2a2a;font-weight:bold;">Plot style</div>
<div class="t" style="left:139.70px;top:277.94px;font-size:6.75px;line-height:8.10px;color:#767676;">Plot style</div>
<div class="t" style="left:217.30px;top:277.94px;font-size:6.75px;line-height:8.10px;color:#a8a8a8;">ByColor</div>
<div class="t" style="left:139.70px;top:288.33px;font-size:6.75px;line-height:8.10px;color:#767676;">Plot style table</div>
<div class="t" style="left:217.30px;top:288.33px;font-size:6.75px;line-height:8.10px;color:#2a2a2a;">None</div>
<div class="t" style="left:139.70px;top:298.73px;font-size:6.75px;line-height:8.10px;color:#767676;">Plot table attached to</div>
<div class="t" style="left:217.30px;top:298.73px;font-size:6.75px;line-height:8.10px;color:#a8a8a8;">Model</div>
<div class="t" style="left:139.70px;top:309.12px;font-size:6.75px;line-height:8.10px;color:#767676;">Plot table type</div>
<div class="t" style="left:217.30px;top:309.12px;font-size:6.75px;line-height:8.10px;color:#a8a8a8;">Not available</div>
<div class="t" style="left:127.30px;top:321.06px;font-size:6.90px;line-height:8.28px;color:#2a2a2a;font-weight:bold;">View</div>
<div class="t" style="left:139.70px;top:331.94px;font-size:6.75px;line-height:8.10px;color:#767676;">Center X</div>
<div class="t" style="left:217.30px;top:331.94px;font-size:6.75px;line-height:8.10px;color:#a8a8a8;">-20859.8606</div>
<div class="t" style="left:139.70px;top:342.33px;font-size:6.75px;line-height:8.10px;color:#767676;">Center Y</div>
<div class="t" style="left:217.30px;top:342.33px;font-size:6.75px;line-height:8.10px;color:#a8a8a8;">-18635.5942</div>
<div class="t" style="left:139.70px;top:352.73px;font-size:6.75px;line-height:8.10px;color:#767676;">Center Z</div>
<div class="t" style="left:217.30px;top:352.73px;font-size:6.75px;line-height:8.10px;color:#a8a8a8;">3000</div>
<div class="t" style="left:139.70px;top:363.12px;font-size:6.75px;line-height:8.10px;color:#767676;">Height</div>
<div class="t" style="left:217.30px;top:363.12px;font-size:6.75px;line-height:8.10px;color:#a8a8a8;">12866.1923</div>
<div class="t" style="left:139.70px;top:373.50px;font-size:6.75px;line-height:8.10px;color:#767676;">Width</div>
<div class="t" style="left:217.30px;top:373.50px;font-size:6.75px;line-height:8.10px;color:#a8a8a8;">25474.0922</div>
<div class="t" style="left:127.30px;top:386.36px;font-size:6.90px;line-height:8.28px;color:#2a2a2a;font-weight:bold;">Misc</div>
<div class="t" style="left:139.70px;top:397.25px;font-size:6.75px;line-height:8.10px;color:#767676;">Annotation scale</div>
<div class="t" style="left:217.30px;top:397.25px;font-size:6.75px;line-height:8.10px;color:#3a3a3a;">1:1</div>
<div class="t" style="left:139.70px;top:407.63px;font-size:6.75px;line-height:8.10px;color:#767676;">UCS icon On</div>
<div class="t" style="left:217.30px;top:407.63px;font-size:6.75px;line-height:8.10px;color:#3a3a3a;">No</div>
<div class="t" style="left:139.70px;top:418.02px;font-size:6.75px;line-height:8.10px;color:#767676;">UCS icon at origin</div>
<div class="t" style="left:217.30px;top:418.02px;font-size:6.75px;line-height:8.10px;color:#3a3a3a;">No</div>
<div class="t" style="left:139.70px;top:428.42px;font-size:6.75px;line-height:8.10px;color:#767676;">UCS per viewport</div>
<div class="t" style="left:217.30px;top:428.42px;font-size:6.75px;line-height:8.10px;color:#3a3a3a;">Yes</div>
<div class="t" style="left:139.70px;top:438.81px;font-size:6.75px;line-height:8.10px;color:#767676;">UCS Name</div>
<div class="t" style="left:217.30px;top:438.81px;font-size:6.75px;line-height:8.10px;color:#3a3a3a;"></div>
<div class="t" style="left:139.70px;top:449.19px;font-size:6.75px;line-height:8.10px;color:#767676;">Visual Style</div>
<div class="t" style="left:217.30px;top:449.19px;font-size:6.75px;line-height:8.10px;color:#3a3a3a;">2D Wireframe</div>
<div class="t" style="left:139.40px;width:600px;text-align:center;top:328.88px;font-size:7.20px;line-height:8.64px;color:#d8d8d8;font-weight:bold;letter-spacing:-0.2px;">100.01</div>
<div class="t" style="left:218.00px;width:600px;text-align:center;top:328.88px;font-size:7.20px;line-height:8.64px;color:#d8d8d8;font-weight:bold;letter-spacing:-0.2px;">100.01</div>
<div class="t" style="left:297.30px;width:600px;text-align:center;top:328.88px;font-size:7.20px;line-height:8.64px;color:#d8d8d8;font-weight:bold;letter-spacing:-0.2px;">100.01</div>
<div class="t" style="left:376.30px;width:600px;text-align:center;top:328.88px;font-size:7.20px;line-height:8.64px;color:#d8d8d8;font-weight:bold;letter-spacing:-0.2px;">100.01</div>
<div class="t" style="left:455.30px;width:600px;text-align:center;top:328.88px;font-size:7.20px;line-height:8.64px;color:#d8d8d8;font-weight:bold;letter-spacing:-0.2px;">100.01</div>
<div class="t" style="left:534.40px;width:600px;text-align:center;top:328.88px;font-size:7.20px;line-height:8.64px;color:#d8d8d8;font-weight:bold;letter-spacing:-0.2px;">100.01</div>
<div class="t" style="left:321.20px;top:128.35px;font-size:7.42px;line-height:8.90px;color:#d4d4d4;">[−][Top][2D Wireframe]</div>
<div class="t" style="left:911.00px;top:145.22px;font-size:7.30px;line-height:8.76px;color:#f4f4f4;">Stabicad</div>
<div class="t" style="left:911.50px;top:160.96px;font-size:6.40px;line-height:7.68px;color:#7a7a7a;font-style:italic;">Search in Online Help</div>
<div class="t" style="left:912.50px;top:174.52px;font-size:7.30px;line-height:8.76px;color:#f4f4f4;">Favorites</div>
<div class="t" style="left:912.00px;top:188.02px;font-size:7.30px;line-height:8.76px;color:#f4f4f4;">StabiTOOLS</div>
<div class="t" style="left:972.50px;top:188.02px;font-size:7.30px;line-height:8.76px;color:#f4f4f4;">Building Layout</div>
<div class="t" style="left:972.50px;top:215.22px;font-size:7.30px;line-height:8.76px;color:#f4f4f4;">Space Manag...</div>
<div class="t" style="left:972.50px;top:229.02px;font-size:7.30px;line-height:8.76px;color:#f4f4f4;">Openings</div>
<div class="t" style="left:912.50px;top:242.32px;font-size:7.30px;line-height:8.76px;color:#f4f4f4;">Ventilation</div>
<div class="t" style="left:912.50px;top:269.62px;font-size:7.30px;line-height:8.76px;color:#f4f4f4;">Waste Water</div>
<div class="t" style="left:972.50px;top:269.62px;font-size:7.30px;line-height:8.76px;color:#f4f4f4;">Sanitary</div>
<div class="t" style="left:912.50px;top:296.82px;font-size:7.30px;line-height:8.76px;color:#f4f4f4;">Heating/Cooli..</div>
<div class="t" style="left:972.50px;top:296.82px;font-size:7.30px;line-height:8.76px;color:#f4f4f4;">Plant Room</div>
<div class="t" style="left:912.50px;top:324.22px;font-size:7.30px;line-height:8.76px;color:#f4f4f4;">Sprinkler</div>
<div class="t" style="left:972.50px;top:324.22px;font-size:7.30px;line-height:8.76px;color:#f4f4f4;">Piping</div>
<div class="t" style="left:912.50px;top:352.22px;font-size:7.30px;line-height:8.76px;color:#f4f4f4;">Mechanical Diagram (CIBSE)</div>
<div class="t" style="left:380.00px;top:482.86px;font-size:6.90px;line-height:8.28px;color:#6a6a6a;font-style:italic;font-family:'Liberation Mono',monospace;letter-spacing:0px;word-spacing:1.2px;">Type a command</div>
<div class="t" style="left:149.80px;top:498.70px;font-size:6.99px;line-height:8.39px;color:#333;font-weight:bold;">Model</div>
<div class="t" style="left:185.00px;top:498.68px;font-size:7.03px;line-height:8.43px;color:#555;">Layout1</div>
<div class="t" style="left:228.50px;top:514.89px;font-size:7.35px;line-height:8.82px;color:#333;">-13852.9890, -18948.7095, 3000.0000</div>
<div class="t" style="left:359.50px;top:515.00px;font-size:7.17px;line-height:8.60px;color:#333;">MODEL</div>
<div class="t" style="left:742.00px;top:515.30px;font-size:7.01px;line-height:8.41px;color:#333;">1:1 / 100%</div>
<div class="t" style="left:845.00px;top:515.10px;font-size:7.34px;line-height:8.80px;color:#333;">Decimal</div>
<div class="t" style="left:686.50px;width:600px;text-align:center;top:529.04px;font-size:6.60px;line-height:7.92px;color:#f0f0f0;">7:01 AM</div>
<div class="t" style="left:686.50px;width:600px;text-align:center;top:538.54px;font-size:6.60px;line-height:7.92px;color:#f0f0f0;">5/23/2025</div>
</body></html>
